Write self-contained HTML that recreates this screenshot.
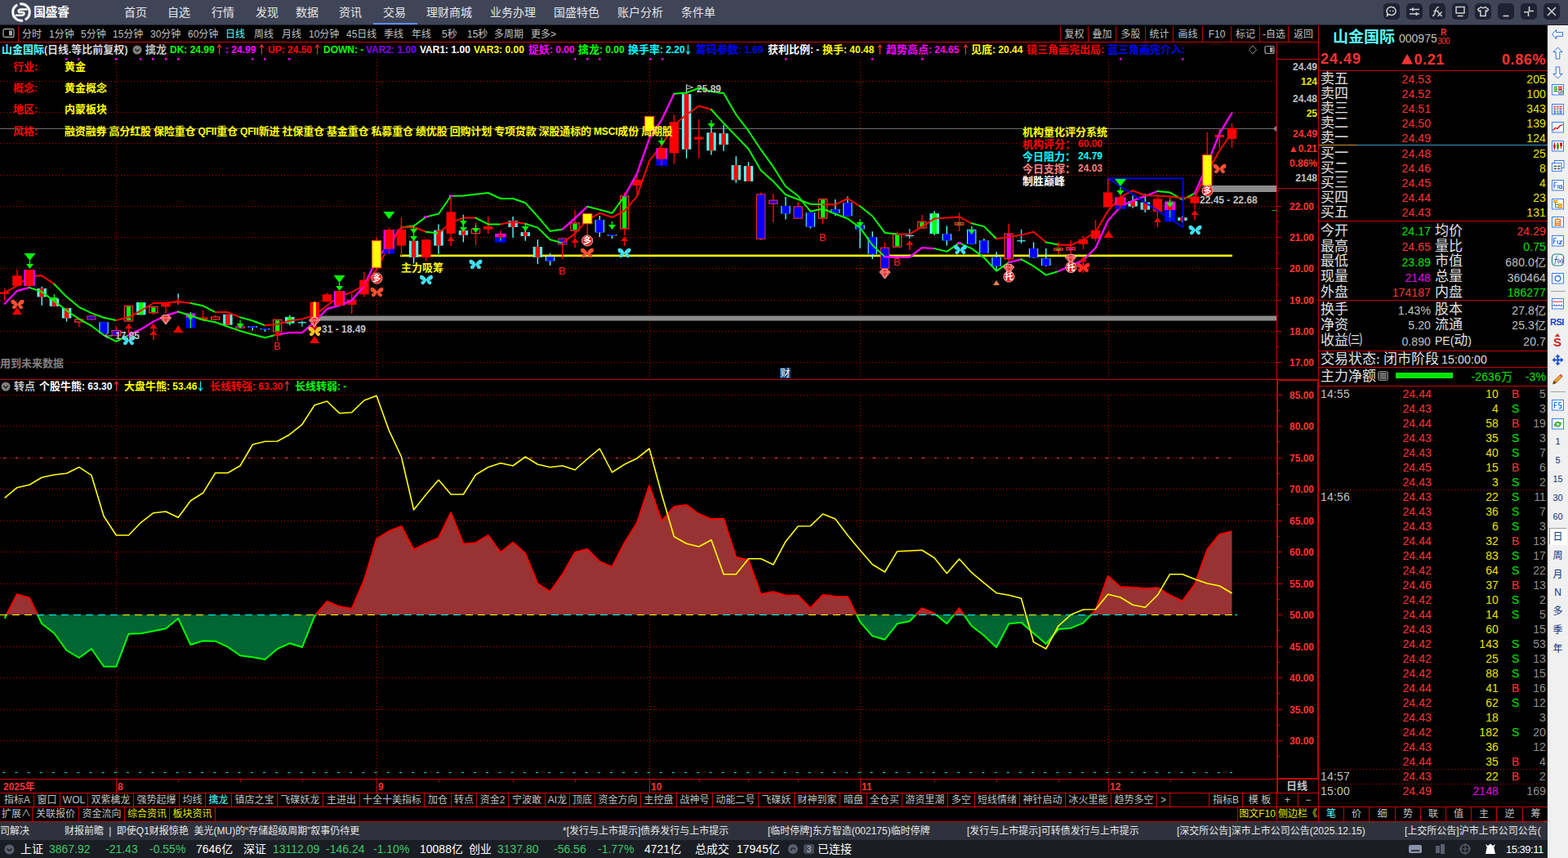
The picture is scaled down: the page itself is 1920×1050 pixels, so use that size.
<!DOCTYPE html>
<html lang="zh"><head><meta charset="utf-8"><title>stock</title><style>
*{box-sizing:border-box;margin:0;padding:0}
html,body{width:1920px;height:1050px;overflow:hidden;background:#000}
body{font-family:"Liberation Sans","Noto Sans CJK SC",sans-serif;color:#c0c0c0;position:relative;font-size:13px}
.abs{position:absolute}
.t{position:absolute;white-space:nowrap;line-height:1}
.b{font-weight:bold}
.hl{position:absolute;height:1px;background:#c80000}
.vl{position:absolute;width:1px;background:#c80000}
#title{position:absolute;left:0;top:0;width:1920px;height:31px;background:#3f4457;border-bottom:1px solid #1e2130}
#title .m{position:absolute;top:7px;font-size:14px;color:#e6e6e6;white-space:nowrap;line-height:16px}
.wb{position:absolute;top:4px;width:20px;height:20px;border-radius:5px;background:#1e2233}
#strip{position:absolute;left:1895px;top:31px;width:25px;height:1019px;background:#f0f0f0;border-left:1px solid #fff;border-top:1px solid #fff}
.r{color:#ff3232}.g{color:#00e600}.y{color:#e6e600}.c{color:#5cffff}.w{color:#e0e0e0}.m{color:#e600e6}.gy{color:#c0c0c0}.dg{color:#808080}
#news{position:absolute;left:0;top:1006px;width:1895px;height:22px;background:#2f323c;overflow:hidden}
#status{position:absolute;left:0;top:1028px;width:1895px;height:22px;background:#1a1d23;overflow:hidden}
.tab{position:absolute;top:971px;height:16px;font-size:12px;line-height:16px;text-align:center;color:#c0c0c0;white-space:nowrap;border-right:1px solid #c80000;overflow:hidden}
.tab2{position:absolute;top:988px;height:17px;font-size:12px;line-height:17px;text-align:center;color:#c0c0c0;white-space:nowrap;border-right:1px solid #c80000;overflow:hidden}
.pt{position:absolute;top:34px;font-size:12px;line-height:16px;color:#c0c0c0;white-space:nowrap}
.rp{position:absolute;white-space:nowrap;line-height:18px;height:18px;font-size:14px}
.lab{font-size:17px;color:#e0e0e0;font-family:"Liberation Serif","Noto Sans CJK SC",serif}
</style></head><body>
<svg class="abs" style="left:0;top:0" width="1920" height="1050" viewBox="0 0 1920 1050" shape-rendering="auto">
<g stroke="#c80000" stroke-width="1" stroke-dasharray="1 3" fill="none">
<path d="M0 99.5H1563"/>
<path d="M0 137.5H1563"/>
<path d="M0 175.5H1563"/>
<path d="M0 214.5H1563"/>
<path d="M0 252.5H1563"/>
<path d="M0 290.5H1563"/>
<path d="M0 328.5H1563"/>
<path d="M0 367.5H1563"/>
<path d="M0 405.5H1563"/>
<path d="M0 443.5H1563"/>
<path d="M0 483.5H1563"/>
<path d="M0 521.5H1563"/>
<path d="M0 560.5H1563"/>
<path d="M0 598.5H1563"/>
<path d="M0 637.5H1563"/>
<path d="M0 675.5H1563"/>
<path d="M0 714.5H1563"/>
<path d="M0 791.5H1563"/>
<path d="M0 829.5H1563"/>
<path d="M0 868.5H1563"/>
<path d="M0 906.5H1563"/>
<path d="M142.5 72V464M142.5 484V953"/>
<path d="M461.5 72V464M461.5 484V953"/>
<path d="M795.5 72V464M795.5 484V953"/>
<path d="M1053.5 72V464M1053.5 484V953"/>
<path d="M1357.5 72V464M1357.5 484V953"/>
</g>
<path d="M4 560.5H1510" stroke="#ff4848" stroke-width="1" stroke-dasharray="3 12" fill="none"/>
<path d="M3.2 945.5h3M18.4 945.5h3M33.6 945.5h3M48.7 945.5h3M63.9 945.5h3M79.1 945.5h3M94.3 945.5h3M109.5 945.5h3M124.6 945.5h3M139.8 945.5h3M155.0 945.5h3M170.2 945.5h3M185.4 945.5h3M200.5 945.5h3M215.7 945.5h3M230.9 945.5h3M246.1 945.5h3M261.3 945.5h3M276.4 945.5h3M291.6 945.5h3M306.8 945.5h3M322.0 945.5h3M337.2 945.5h3M352.3 945.5h3M367.5 945.5h3M382.7 945.5h3M397.9 945.5h3M413.1 945.5h3M428.2 945.5h3M443.4 945.5h3M458.6 945.5h3M473.8 945.5h3M489.0 945.5h3M504.1 945.5h3M519.3 945.5h3M534.5 945.5h3M549.7 945.5h3M564.9 945.5h3M580.0 945.5h3M595.2 945.5h3M610.4 945.5h3M625.6 945.5h3M640.8 945.5h3M655.9 945.5h3M671.1 945.5h3M686.3 945.5h3M701.5 945.5h3M716.7 945.5h3M731.8 945.5h3M747.0 945.5h3M762.2 945.5h3M777.4 945.5h3M792.6 945.5h3M807.7 945.5h3M822.9 945.5h3M838.1 945.5h3M853.3 945.5h3M868.5 945.5h3M883.6 945.5h3M898.8 945.5h3M914.0 945.5h3M929.2 945.5h3M944.4 945.5h3M959.5 945.5h3M974.7 945.5h3M989.9 945.5h3M1005.1 945.5h3M1020.3 945.5h3M1035.4 945.5h3M1050.6 945.5h3M1065.8 945.5h3M1081.0 945.5h3M1096.2 945.5h3M1111.3 945.5h3M1126.5 945.5h3M1141.7 945.5h3M1156.9 945.5h3M1172.1 945.5h3M1187.2 945.5h3M1202.4 945.5h3M1217.6 945.5h3M1232.8 945.5h3M1248.0 945.5h3M1263.1 945.5h3M1278.3 945.5h3M1293.5 945.5h3M1308.7 945.5h3M1323.9 945.5h3M1339.0 945.5h3M1354.2 945.5h3M1369.4 945.5h3M1384.6 945.5h3M1399.8 945.5h3M1414.9 945.5h3M1430.1 945.5h3M1445.3 945.5h3M1460.5 945.5h3M1475.7 945.5h3M1490.8 945.5h3M1506.0 945.5h3" stroke="#00e0e0" stroke-width="1" fill="none"/>
<path d="M0 157.5H1563" stroke="#6e6e6e" stroke-width="1"/><path d="M1563 154v7l-4.500-3.500z" fill="#808080"/>
<rect x="388" y="386.5" width="1175" height="6" fill="#8c8c8c"/>
<rect x="1483" y="227" width="80" height="8" fill="#8c8c8c"/>
<rect x="490" y="311.6" width="1019" height="2.6" fill="#ffff00"/>
<defs><clipPath id="cu"><rect x="0" y="466" width="1563" height="286.29999999999995"/></clippath><clipPath id="cd"><rect x="0" y="752.3" width="1563" height="200"/></clippath></defs>
<polygon points="5.7,752.3 5.7,756.7 20.9,727.3 36.1,731.7 51.2,763.3 66.4,775 81.6,796 96.8,805 112.0,794 127.1,815.7 142.3,815.7 157.5,775.7 172.7,775.3 187.9,772.3 203.0,769.3 218.2,756.7 233.4,789 248.6,784.3 263.8,784.7 278.9,791.7 294.1,802.3 309.3,804.3 324.5,807 339.7,794 354.8,787.3 370.0,792 385.2,754 400.4,736 415.6,742.3 430.7,745 445.9,710 461.1,659.3 476.3,650 491.5,644 506.6,672.7 521.8,665 537.0,658.3 552.2,627.3 567.4,665.7 582.5,664.3 597.7,655 612.9,676 628.1,663.7 643.3,677.3 658.4,714.3 673.6,724 688.8,702.7 704.0,676 719.2,672 734.3,687.3 749.5,693.7 764.7,664.3 779.9,640 795.1,594.3 810.2,637.3 825.4,620 840.6,618 855.8,629 871.0,635.3 886.1,634.7 901.3,682 916.5,685.3 931.7,727.3 946.9,724.3 962.0,728.7 977.2,728.7 992.4,744.3 1007.6,728 1022.8,730 1037.9,730.3 1053.1,761 1068.3,778.3 1083.5,782.7 1098.7,763.3 1113.8,760.3 1129.0,744.3 1144.2,750.7 1159.4,763.3 1174.6,744.3 1189.7,766 1204.9,777.7 1220.1,792.3 1235.3,763.3 1250.5,761.7 1265.6,775 1280.8,788 1296.0,770 1311.2,768.7 1326.4,762.3 1341.5,746.7 1356.7,705 1371.9,718.3 1387.1,719 1402.3,720.3 1417.4,719.3 1432.6,728.3 1447.8,735.7 1463.0,715 1478.2,672.7 1493.3,654 1508.5,650.3 1508.5,752.3" fill="#993333" clip-path="url(#cu)"/>
<polygon points="5.7,752.3 5.7,756.7 20.9,727.3 36.1,731.7 51.2,763.3 66.4,775 81.6,796 96.8,805 112.0,794 127.1,815.7 142.3,815.7 157.5,775.7 172.7,775.3 187.9,772.3 203.0,769.3 218.2,756.7 233.4,789 248.6,784.3 263.8,784.7 278.9,791.7 294.1,802.3 309.3,804.3 324.5,807 339.7,794 354.8,787.3 370.0,792 385.2,754 400.4,736 415.6,742.3 430.7,745 445.9,710 461.1,659.3 476.3,650 491.5,644 506.6,672.7 521.8,665 537.0,658.3 552.2,627.3 567.4,665.7 582.5,664.3 597.7,655 612.9,676 628.1,663.7 643.3,677.3 658.4,714.3 673.6,724 688.8,702.7 704.0,676 719.2,672 734.3,687.3 749.5,693.7 764.7,664.3 779.9,640 795.1,594.3 810.2,637.3 825.4,620 840.6,618 855.8,629 871.0,635.3 886.1,634.7 901.3,682 916.5,685.3 931.7,727.3 946.9,724.3 962.0,728.7 977.2,728.7 992.4,744.3 1007.6,728 1022.8,730 1037.9,730.3 1053.1,761 1068.3,778.3 1083.5,782.7 1098.7,763.3 1113.8,760.3 1129.0,744.3 1144.2,750.7 1159.4,763.3 1174.6,744.3 1189.7,766 1204.9,777.7 1220.1,792.3 1235.3,763.3 1250.5,761.7 1265.6,775 1280.8,788 1296.0,770 1311.2,768.7 1326.4,762.3 1341.5,746.7 1356.7,705 1371.9,718.3 1387.1,719 1402.3,720.3 1417.4,719.3 1432.6,728.3 1447.8,735.7 1463.0,715 1478.2,672.7 1493.3,654 1508.5,650.3 1508.5,752.3" fill="#006633" clip-path="url(#cd)"/>
<polyline points="5.7,756.7 20.9,727.3 36.1,731.7 51.2,763.3 66.4,775 81.6,796 96.8,805 112.0,794 127.1,815.7 142.3,815.7 157.5,775.7 172.7,775.3 187.9,772.3 203.0,769.3 218.2,756.7 233.4,789 248.6,784.3 263.8,784.7 278.9,791.7 294.1,802.3 309.3,804.3 324.5,807 339.7,794 354.8,787.3 370.0,792 385.2,754 400.4,736 415.6,742.3 430.7,745 445.9,710 461.1,659.3 476.3,650 491.5,644 506.6,672.7 521.8,665 537.0,658.3 552.2,627.3 567.4,665.7 582.5,664.3 597.7,655 612.9,676 628.1,663.7 643.3,677.3 658.4,714.3 673.6,724 688.8,702.7 704.0,676 719.2,672 734.3,687.3 749.5,693.7 764.7,664.3 779.9,640 795.1,594.3 810.2,637.3 825.4,620 840.6,618 855.8,629 871.0,635.3 886.1,634.7 901.3,682 916.5,685.3 931.7,727.3 946.9,724.3 962.0,728.7 977.2,728.7 992.4,744.3 1007.6,728 1022.8,730 1037.9,730.3 1053.1,761 1068.3,778.3 1083.5,782.7 1098.7,763.3 1113.8,760.3 1129.0,744.3 1144.2,750.7 1159.4,763.3 1174.6,744.3 1189.7,766 1204.9,777.7 1220.1,792.3 1235.3,763.3 1250.5,761.7 1265.6,775 1280.8,788 1296.0,770 1311.2,768.7 1326.4,762.3 1341.5,746.7 1356.7,705 1371.9,718.3 1387.1,719 1402.3,720.3 1417.4,719.3 1432.6,728.3 1447.8,735.7 1463.0,715 1478.2,672.7 1493.3,654 1508.5,650.3" fill="none" stroke="#ff0000" stroke-width="2" stroke-linejoin="round" clip-path="url(#cu)"/>
<polyline points="5.7,756.7 20.9,727.3 36.1,731.7 51.2,763.3 66.4,775 81.6,796 96.8,805 112.0,794 127.1,815.7 142.3,815.7 157.5,775.7 172.7,775.3 187.9,772.3 203.0,769.3 218.2,756.7 233.4,789 248.6,784.3 263.8,784.7 278.9,791.7 294.1,802.3 309.3,804.3 324.5,807 339.7,794 354.8,787.3 370.0,792 385.2,754 400.4,736 415.6,742.3 430.7,745 445.9,710 461.1,659.3 476.3,650 491.5,644 506.6,672.7 521.8,665 537.0,658.3 552.2,627.3 567.4,665.7 582.5,664.3 597.7,655 612.9,676 628.1,663.7 643.3,677.3 658.4,714.3 673.6,724 688.8,702.7 704.0,676 719.2,672 734.3,687.3 749.5,693.7 764.7,664.3 779.9,640 795.1,594.3 810.2,637.3 825.4,620 840.6,618 855.8,629 871.0,635.3 886.1,634.7 901.3,682 916.5,685.3 931.7,727.3 946.9,724.3 962.0,728.7 977.2,728.7 992.4,744.3 1007.6,728 1022.8,730 1037.9,730.3 1053.1,761 1068.3,778.3 1083.5,782.7 1098.7,763.3 1113.8,760.3 1129.0,744.3 1144.2,750.7 1159.4,763.3 1174.6,744.3 1189.7,766 1204.9,777.7 1220.1,792.3 1235.3,763.3 1250.5,761.7 1265.6,775 1280.8,788 1296.0,770 1311.2,768.7 1326.4,762.3 1341.5,746.7 1356.7,705 1371.9,718.3 1387.1,719 1402.3,720.3 1417.4,719.3 1432.6,728.3 1447.8,735.7 1463.0,715 1478.2,672.7 1493.3,654 1508.5,650.3" fill="none" stroke="#00ff00" stroke-width="2" stroke-linejoin="round" clip-path="url(#cd)"/>
<path d="M0 752.5H1512" stroke="#ffff00" stroke-width="1" stroke-dasharray="9 6" fill="none"/>
<path d="M45 752.5H150M255 752.5H360M465 752.5H570M675 752.5H780M885 752.5H990M1095 752.5H1200M1305 752.5H1410M1515 752.5H1512" stroke="#00ffff" stroke-width="1" stroke-dasharray="9 6" fill="none"/>
<polyline points="5.7,609.3 20.9,596.7 36.1,593.3 51.2,584.3 66.4,581 81.6,579.3 96.8,571.7 112.0,581.7 127.1,631.7 142.3,655 157.5,655 172.7,639.3 187.9,627.7 203.0,626 218.2,633.3 233.4,612.7 248.6,603.3 263.8,578.7 278.9,578.7 294.1,570 309.3,544 324.5,540.3 339.7,540 354.8,531.7 370.0,519.3 385.2,495.7 400.4,491 415.6,505.7 430.7,504.7 445.9,490 461.1,484.3 476.3,526.7 491.5,559 506.6,624 521.8,605 537.0,587.3 552.2,605 567.4,605 582.5,581 597.7,571.7 612.9,566.7 628.1,570 643.3,559 658.4,568.3 673.6,571.7 688.8,570 704.0,575 719.2,561.7 734.3,549 749.5,578 764.7,568.3 779.9,561 795.1,549 810.2,605 825.4,656.7 840.6,665.3 855.8,669 871.0,660.7 886.1,702.7 901.3,702.7 916.5,683.7 931.7,683.7 946.9,691 962.0,662.7 977.2,644 992.4,643.7 1007.6,629 1022.8,635 1037.9,655 1053.1,673.3 1068.3,690.7 1083.5,700 1098.7,674.7 1113.8,674 1129.0,673.3 1144.2,682.7 1159.4,701.7 1174.6,684 1189.7,700.7 1204.9,713.3 1220.1,725.7 1235.3,728.3 1250.5,732.3 1265.6,785.7 1280.8,794 1296.0,766 1311.2,752.3 1326.4,746 1341.5,745.7 1356.7,727.3 1371.9,731 1387.1,740.3 1402.3,743.3 1417.4,728.3 1432.6,702.7 1447.8,702.7 1463.0,708.7 1478.2,714 1493.3,717 1508.5,726" fill="none" stroke="#ffff00" stroke-width="1.6" stroke-linejoin="round"/>
<path d="M5.7 352.9V367.5" stroke="#ff0000" stroke-width="1.4"/>
<rect x="0.0" y="357.5" width="11.4" height="2.1" fill="#ff0000"/>
<path d="M20.9 330.0V349.8" stroke="#ff0000" stroke-width="1.4"/>
<rect x="15.2" y="337.3" width="11.4" height="12.5" fill="#ff0000"/>
<path d="M51.2 350.8V373.8" stroke="#54ffff" stroke-width="1.4"/>
<rect x="45.5" y="352.9" width="11.4" height="10.4" fill="#54ffff"/>
<rect x="48.4" y="352.9" width="5.6" height="10.4" fill="#ff0000"/>
<path d="M66.4 365.4V374.8" stroke="#54ffff" stroke-width="1.4"/>
<rect x="60.7" y="365.4" width="11.4" height="9.4" fill="#54ffff"/>
<rect x="63.6" y="365.4" width="5.6" height="9.4" fill="#ff0000"/>
<path d="M81.6 376.9V393.5" stroke="#54ffff" stroke-width="1.4"/>
<rect x="75.9" y="376.9" width="11.4" height="12.5" fill="#54ffff"/>
<rect x="78.8" y="376.9" width="5.6" height="12.5" fill="#ff0000"/>
<path d="M96.8 390.4V400.4" stroke="#ff0000" stroke-width="1.4"/>
<rect x="91.7" y="391.0" width="10.2" height="3.0" fill="#000" stroke="#ff3030" stroke-width="1.3"/>
<path d="M112.0 386.2V391.5" stroke="#ff0000" stroke-width="1.4"/>
<rect x="106.8" y="386.8" width="10.4" height="4.2" fill="#0000ff" stroke="#ff3030" stroke-width="1"/>
<path d="M127.1 394.2V408.1" stroke="#54ffff" stroke-width="1.4"/>
<rect x="121.4" y="394.2" width="11.4" height="13.9" fill="#54ffff"/>
<rect x="122.5" y="394.2" width="9.2" height="13.9" fill="#0000ff"/>
<path d="M142.3 398.8V411.2" stroke="#ff0000" stroke-width="1.4"/>
<rect x="137.1" y="404.5" width="10.4" height="6.2" fill="#0000ff" stroke="#ff3030" stroke-width="1"/>
<path d="M157.5 373.8V393.5" stroke="#ff0000" stroke-width="1.4"/>
<rect x="152.4" y="374.4" width="10.2" height="18.6" fill="#000" stroke="#ff3030" stroke-width="1.3"/>
<rect x="154.9" y="375.2" width="5.2" height="16.8" fill="#00ff00"/>
<path d="M172.7 370.0V385.2" stroke="#54ffff" stroke-width="1.4"/>
<rect x="167.0" y="370.0" width="11.4" height="15.2" fill="#54ffff"/>
<rect x="169.9" y="370.0" width="5.6" height="15.2" fill="#00ff00"/>
<path d="M187.9 374.8V385.0" stroke="#ff0000" stroke-width="1.4"/>
<rect x="182.8" y="375.4" width="10.2" height="7.5" fill="#000" stroke="#ff3030" stroke-width="1.3"/>
<rect x="185.3" y="376.3" width="5.2" height="5.7" fill="#00ff00"/>
<path d="M203.0 371.0V383.5" stroke="#ff0000" stroke-width="1.4"/>
<rect x="197.3" y="371.0" width="11.4" height="4.4" fill="#ff0000"/>
<path d="M218.2 359.2V372.7" stroke="#54ffff" stroke-width="1.4"/>
<path d="M218.2 364.2V372.7" stroke="#ff0000" stroke-width="1.4"/>
<path d="M213.5 369.0H222.9" stroke="#ff0000" stroke-width="1.4"/>
<rect x="227.7" y="383.5" width="11.4" height="18.0" fill="#0000ff"/>
<rect x="227.7" y="383.5" width="11.4" height="5.0" fill="#ff00ff"/>
<path d="M233.4 387.5V401.5" stroke="#00ff00" stroke-width="1.2"/>
<path d="M248.6 380.0V392.5" stroke="#ff0000" stroke-width="1.4"/>
<rect x="242.9" y="388.3" width="11.4" height="3.2" fill="#ff0000"/>
<path d="M263.8 385.6V391.5" stroke="#ff0000" stroke-width="1.4"/>
<rect x="258.7" y="387.9" width="10.2" height="3.0" fill="#000" stroke="#ff3030" stroke-width="1.3"/>
<path d="M278.9 384.8V397.7" stroke="#54ffff" stroke-width="1.4"/>
<rect x="273.2" y="384.8" width="11.4" height="12.9" fill="#54ffff"/>
<rect x="276.1" y="384.8" width="5.6" height="12.9" fill="#ff0000"/>
<path d="M294.1 398.8V401.9" stroke="#ff0000" stroke-width="1.4"/>
<rect x="288.9" y="399.2" width="10.4" height="2.1" fill="#0000ff" stroke="#ff3030" stroke-width="1"/>
<path d="M309.3 399.2V404.6" stroke="#54ffff" stroke-width="1.4"/>
<rect x="303.6" y="399.2" width="11.4" height="1.6" fill="#54ffff"/>
<rect x="304.7" y="399.2" width="9.2" height="1.6" fill="#0000ff"/>
<path d="M324.5 401.9V406.0" stroke="#54ffff" stroke-width="1.4"/>
<rect x="318.8" y="401.9" width="11.4" height="1.4" fill="#54ffff"/>
<rect x="319.9" y="401.9" width="9.2" height="1.4" fill="#0000ff"/>
<path d="M339.7 390.8V406.5" stroke="#ff0000" stroke-width="1.4"/>
<rect x="334.6" y="391.4" width="10.2" height="14.5" fill="#000" stroke="#ff3030" stroke-width="1.3"/>
<rect x="337.1" y="392.3" width="5.2" height="12.7" fill="#00ff00"/>
<path d="M354.8 385.8V398.1" stroke="#54ffff" stroke-width="1.4"/>
<rect x="349.1" y="387.9" width="11.4" height="7.7" fill="#54ffff"/>
<rect x="352.0" y="387.9" width="5.6" height="7.7" fill="#00ff00"/>
<path d="M370.0 392.5V399.8" stroke="#54ffff" stroke-width="1.1"/>
<path d="M364.8 394.8H375.2" stroke="#54ffff" stroke-width="1.2"/>
<path d="M400.4 358.2V369.3" stroke="#ff0000" stroke-width="1.4"/>
<rect x="394.7" y="360.3" width="11.4" height="9.0" fill="#ff0000"/>
<path d="M430.7 359.2V384.0" stroke="#ff0000" stroke-width="1.4"/>
<rect x="425.0" y="366.6" width="11.4" height="6.3" fill="#ff0000"/>
<path d="M445.9 333.0V363.4" stroke="#ff0000" stroke-width="1.4"/>
<rect x="440.2" y="342.5" width="11.4" height="17.8" fill="#ff0000"/>
<path d="M491.5 266.0V313.1" stroke="#ff0000" stroke-width="1.4"/>
<rect x="485.8" y="280.7" width="11.4" height="19.9" fill="#ff0000"/>
<path d="M506.6 294.7V322.6" stroke="#54ffff" stroke-width="1.4"/>
<rect x="500.9" y="294.7" width="11.4" height="20.1" fill="#54ffff"/>
<rect x="503.8" y="294.7" width="5.6" height="20.1" fill="#ff0000"/>
<path d="M521.8 293.2V319.8" stroke="#ff0000" stroke-width="1.4"/>
<rect x="516.1" y="293.2" width="11.4" height="22.0" fill="#ff0000"/>
<path d="M537.0 274.4V311.0" stroke="#54ffff" stroke-width="1.4"/>
<rect x="531.3" y="281.7" width="11.4" height="18.9" fill="#54ffff"/>
<rect x="534.2" y="281.7" width="5.6" height="18.9" fill="#ff0000"/>
<path d="M552.2 241.9V289.0" stroke="#ff0000" stroke-width="1.4"/>
<rect x="546.5" y="259.3" width="11.4" height="26.6" fill="#ff0000"/>
<path d="M567.4 262.9V296.4" stroke="#54ffff" stroke-width="1.4"/>
<rect x="561.7" y="282.1" width="11.4" height="5.5" fill="#54ffff"/>
<rect x="564.6" y="282.1" width="5.6" height="5.5" fill="#ff0000"/>
<path d="M582.5 272.3V300.0" stroke="#ff0000" stroke-width="1.4"/>
<rect x="577.4" y="280.2" width="10.2" height="5.5" fill="#000" stroke="#ff3030" stroke-width="1.3"/>
<path d="M597.7 265.0V286.3" stroke="#ff0000" stroke-width="1.4"/>
<rect x="592.0" y="277.1" width="11.4" height="3.6" fill="#ff0000"/>
<path d="M628.1 265.0V291.0" stroke="#54ffff" stroke-width="1.4"/>
<rect x="622.4" y="270.2" width="11.4" height="7.7" fill="#54ffff"/>
<rect x="625.3" y="270.2" width="5.6" height="7.7" fill="#ff0000"/>
<path d="M643.3 280.7V294.7" stroke="#54ffff" stroke-width="1.4"/>
<rect x="637.6" y="284.2" width="11.4" height="4.8" fill="#54ffff"/>
<rect x="640.5" y="284.2" width="5.6" height="4.8" fill="#ff0000"/>
<path d="M658.4 293.2V323.2" stroke="#54ffff" stroke-width="1.4"/>
<rect x="652.7" y="302.0" width="11.4" height="12.8" fill="#54ffff"/>
<rect x="655.6" y="302.0" width="5.6" height="12.8" fill="#ff0000"/>
<path d="M673.6 310.0V325.0" stroke="#54ffff" stroke-width="1.4"/>
<rect x="667.9" y="314.2" width="11.4" height="5.2" fill="#54ffff"/>
<rect x="669.0" y="314.2" width="9.2" height="5.2" fill="#0000ff"/>
<path d="M688.8 291.6V316.7" stroke="#ff0000" stroke-width="1.4"/>
<rect x="683.6" y="292.1" width="10.4" height="6.9" fill="#0000ff" stroke="#ff3030" stroke-width="1"/>
<path d="M704.0 257.0V291.0" stroke="#ff0000" stroke-width="1.4"/>
<rect x="698.9" y="272.9" width="10.2" height="9.3" fill="#000" stroke="#ff3030" stroke-width="1.3"/>
<rect x="701.4" y="273.8" width="5.2" height="7.5" fill="#00ff00"/>
<path d="M734.3 263.9V290.0" stroke="#54ffff" stroke-width="1.4"/>
<rect x="728.6" y="269.1" width="11.4" height="15.3" fill="#54ffff"/>
<rect x="729.7" y="269.1" width="9.2" height="15.3" fill="#0000ff"/>
<path d="M749.5 287.0V292.2" stroke="#54ffff" stroke-width="1.4"/>
<rect x="743.8" y="287.0" width="11.4" height="1.4" fill="#54ffff"/>
<rect x="744.9" y="287.0" width="9.2" height="1.4" fill="#0000ff"/>
<path d="M764.7 235.6V288.0" stroke="#ff0000" stroke-width="1.4"/>
<rect x="759.6" y="240.0" width="10.2" height="39.9" fill="#000" stroke="#ff3030" stroke-width="1.3"/>
<rect x="762.1" y="240.9" width="5.2" height="38.1" fill="#00ff00"/>
<path d="M779.9 213.6V237.7" stroke="#ff0000" stroke-width="1.4"/>
<rect x="774.2" y="219.9" width="11.4" height="7.3" fill="#ff0000"/>
<path d="M825.4 140.3V200.6" stroke="#ff0000" stroke-width="1.4"/>
<rect x="819.7" y="149.3" width="11.4" height="38.1" fill="#ff0000"/>
<path d="M840.6 103.6V193.7" stroke="#54ffff" stroke-width="1.4"/>
<rect x="834.9" y="115.1" width="11.4" height="67.7" fill="#54ffff"/>
<rect x="837.8" y="115.1" width="5.6" height="67.7" fill="#ff0000"/>
<path d="M855.8 146.2V193.7" stroke="#ff0000" stroke-width="1.4"/>
<rect x="850.1" y="167.5" width="11.4" height="3.2" fill="#ff0000"/>
<path d="M871.0 156.0V189.5" stroke="#54ffff" stroke-width="1.4"/>
<rect x="865.3" y="162.3" width="11.4" height="22.0" fill="#54ffff"/>
<rect x="868.2" y="162.3" width="5.6" height="22.0" fill="#ff0000"/>
<path d="M886.1 152.9V184.7" stroke="#54ffff" stroke-width="1.4"/>
<rect x="880.4" y="163.3" width="11.4" height="13.7" fill="#54ffff"/>
<rect x="883.3" y="163.3" width="5.6" height="13.7" fill="#ff0000"/>
<path d="M901.3 191.2V223.7" stroke="#54ffff" stroke-width="1.4"/>
<rect x="895.6" y="202.1" width="11.4" height="18.2" fill="#54ffff"/>
<rect x="898.5" y="202.1" width="5.6" height="18.2" fill="#ff0000"/>
<path d="M916.5 198.3V222.0" stroke="#54ffff" stroke-width="1.4"/>
<rect x="910.8" y="203.1" width="11.4" height="18.9" fill="#54ffff"/>
<rect x="913.7" y="203.1" width="5.6" height="18.9" fill="#ff0000"/>
<path d="M931.7 235.5V294.0" stroke="#ff0000" stroke-width="1.4"/>
<rect x="926.5" y="237.8" width="10.4" height="54.5" fill="#0000ff" stroke="#ff3030" stroke-width="1"/>
<path d="M946.9 237.3V272.3" stroke="#ff0000" stroke-width="1.4"/>
<rect x="941.7" y="245.1" width="10.4" height="4.1" fill="#0000ff" stroke="#ff3030" stroke-width="1"/>
<path d="M962.0 240.9V268.5" stroke="#54ffff" stroke-width="1.4"/>
<rect x="956.3" y="252.0" width="11.4" height="9.4" fill="#54ffff"/>
<rect x="957.4" y="252.0" width="9.2" height="9.4" fill="#0000ff"/>
<path d="M977.2 247.2V267.7" stroke="#ff0000" stroke-width="1.4"/>
<rect x="972.0" y="252.9" width="10.4" height="14.3" fill="#0000ff" stroke="#ff3030" stroke-width="1"/>
<path d="M992.4 260.1V279.6" stroke="#54ffff" stroke-width="1.4"/>
<rect x="986.7" y="260.1" width="11.4" height="17.4" fill="#54ffff"/>
<rect x="987.8" y="260.1" width="9.2" height="17.4" fill="#0000ff"/>
<path d="M1007.6 243.0V274.4" stroke="#ff0000" stroke-width="1.4"/>
<rect x="1002.5" y="243.6" width="10.2" height="23.5" fill="#000" stroke="#ff3030" stroke-width="1.3"/>
<rect x="1005.0" y="244.5" width="5.2" height="21.7" fill="#00ff00"/>
<path d="M1022.8 244.0V264.3" stroke="#54ffff" stroke-width="1.4"/>
<rect x="1017.1" y="256.2" width="11.4" height="4.6" fill="#54ffff"/>
<rect x="1018.2" y="256.2" width="9.2" height="4.6" fill="#0000ff"/>
<path d="M1037.9 240.4V264.3" stroke="#54ffff" stroke-width="1.4"/>
<rect x="1032.2" y="248.2" width="11.4" height="16.1" fill="#54ffff"/>
<rect x="1033.3" y="248.2" width="9.2" height="16.1" fill="#0000ff"/>
<path d="M1053.1 275.4V303.7" stroke="#54ffff" stroke-width="1.4"/>
<rect x="1047.4" y="275.4" width="11.4" height="4.9" fill="#54ffff"/>
<rect x="1048.5" y="275.4" width="9.2" height="4.9" fill="#0000ff"/>
<path d="M1068.3 283.3V316.9" stroke="#54ffff" stroke-width="1.4"/>
<rect x="1062.6" y="290.1" width="11.4" height="20.9" fill="#54ffff"/>
<rect x="1063.7" y="290.1" width="9.2" height="20.9" fill="#0000ff"/>
<path d="M1083.5 296.4V328.9" stroke="#ff0000" stroke-width="1.4"/>
<rect x="1078.3" y="303.2" width="10.4" height="25.2" fill="#0000ff" stroke="#ff3030" stroke-width="1"/>
<path d="M1098.7 283.4V302.7" stroke="#ff0000" stroke-width="1.4"/>
<rect x="1093.6" y="286.7" width="10.2" height="15.4" fill="#000" stroke="#ff3030" stroke-width="1.3"/>
<rect x="1096.1" y="287.6" width="5.2" height="13.6" fill="#00ff00"/>
<path d="M1113.8 280.0V292.2" stroke="#54ffff" stroke-width="1.1"/>
<path d="M1108.6 288.5H1119.0" stroke="#54ffff" stroke-width="1.2"/>
<path d="M1129.0 262.9V279.6" stroke="#ff0000" stroke-width="1.4"/>
<rect x="1123.9" y="271.3" width="10.2" height="7.7" fill="#000" stroke="#ff3030" stroke-width="1.3"/>
<rect x="1126.4" y="272.2" width="5.2" height="5.9" fill="#00ff00"/>
<path d="M1144.2 258.2V288.0" stroke="#54ffff" stroke-width="1.4"/>
<rect x="1138.5" y="261.3" width="11.4" height="24.8" fill="#54ffff"/>
<rect x="1141.4" y="261.3" width="5.6" height="24.8" fill="#00ff00"/>
<path d="M1159.4 276.5V300.6" stroke="#54ffff" stroke-width="1.4"/>
<rect x="1153.7" y="286.3" width="11.4" height="8.0" fill="#54ffff"/>
<rect x="1154.8" y="286.3" width="9.2" height="8.0" fill="#0000ff"/>
<path d="M1174.6 260.3V282.8" stroke="#ff0000" stroke-width="1.4"/>
<rect x="1169.5" y="272.5" width="10.2" height="2.8" fill="#000" stroke="#ff3030" stroke-width="1.3"/>
<rect x="1172.0" y="273.4" width="5.2" height="1.2" fill="#00ff00"/>
<path d="M1189.7 277.0V298.5" stroke="#54ffff" stroke-width="1.4"/>
<rect x="1184.0" y="280.7" width="11.4" height="17.8" fill="#54ffff"/>
<rect x="1185.1" y="280.7" width="9.2" height="17.8" fill="#0000ff"/>
<path d="M1204.9 292.0V310.0" stroke="#54ffff" stroke-width="1.4"/>
<rect x="1199.2" y="294.3" width="11.4" height="15.7" fill="#54ffff"/>
<rect x="1200.3" y="294.3" width="9.2" height="15.7" fill="#0000ff"/>
<path d="M1220.1 308.3V331.0" stroke="#54ffff" stroke-width="1.4"/>
<rect x="1214.4" y="314.8" width="11.4" height="10.9" fill="#54ffff"/>
<rect x="1215.5" y="314.8" width="9.2" height="10.9" fill="#0000ff"/>
<path d="M1235.3 273.8V321.5" stroke="#ff0000" stroke-width="1.4"/>
<rect x="1230.2" y="286.1" width="10.2" height="30.6" fill="#000" stroke="#ff3030" stroke-width="1.3"/>
<rect x="1232.7" y="287.0" width="5.2" height="28.8" fill="#ff00ff"/>
<path d="M1250.5 280.7V298.0" stroke="#54ffff" stroke-width="1.1"/>
<path d="M1245.3 294.8H1255.7" stroke="#54ffff" stroke-width="1.2"/>
<path d="M1265.6 296.4V316.0" stroke="#54ffff" stroke-width="1.4"/>
<rect x="1259.9" y="304.1" width="11.4" height="11.1" fill="#54ffff"/>
<rect x="1261.0" y="304.1" width="9.2" height="11.1" fill="#0000ff"/>
<path d="M1280.8 304.1V326.0" stroke="#54ffff" stroke-width="1.4"/>
<rect x="1275.1" y="316.3" width="11.4" height="8.8" fill="#54ffff"/>
<rect x="1276.2" y="316.3" width="9.2" height="8.8" fill="#0000ff"/>
<path d="M1296.0 296.4V311.0" stroke="#ff0000" stroke-width="1.4"/>
<rect x="1290.9" y="303.9" width="10.2" height="2.4" fill="#000" stroke="#ff3030" stroke-width="1.3"/>
<rect x="1293.4" y="304.8" width="5.2" height="1.2" fill="#00ff00"/>
<path d="M1311.2 293.7V311.0" stroke="#ff0000" stroke-width="1.4"/>
<rect x="1306.1" y="302.9" width="10.2" height="2.9" fill="#000" stroke="#ff3030" stroke-width="1.3"/>
<rect x="1308.6" y="303.8" width="5.2" height="1.2" fill="#ff00ff"/>
<path d="M1326.4 289.0V304.8" stroke="#ff0000" stroke-width="1.4"/>
<rect x="1320.7" y="292.8" width="11.4" height="6.1" fill="#ff0000"/>
<path d="M1341.5 269.1V295.3" stroke="#ff0000" stroke-width="1.4"/>
<rect x="1335.8" y="281.7" width="11.4" height="10.5" fill="#ff0000"/>
<path d="M1356.7 218.3V253.6" stroke="#ff0000" stroke-width="1.4"/>
<rect x="1351.0" y="235.4" width="11.4" height="18.2" fill="#ff0000"/>
<path d="M1387.1 239.5V254.8" stroke="#54ffff" stroke-width="1.4"/>
<rect x="1381.4" y="246.1" width="11.4" height="6.5" fill="#54ffff"/>
<rect x="1384.3" y="246.1" width="5.6" height="6.5" fill="#ff0000"/>
<path d="M1402.3 237.2V259.9" stroke="#54ffff" stroke-width="1.4"/>
<rect x="1396.6" y="247.6" width="11.4" height="9.0" fill="#54ffff"/>
<rect x="1399.5" y="247.6" width="5.6" height="9.0" fill="#ff0000"/>
<path d="M1417.4 238.8V266.1" stroke="#ff0000" stroke-width="1.4"/>
<rect x="1411.7" y="243.4" width="11.4" height="15.7" fill="#ff0000"/>
<path d="M1447.8 264.3V272.0" stroke="#54ffff" stroke-width="1.4"/>
<rect x="1442.1" y="266.2" width="11.4" height="3.8" fill="#54ffff"/>
<rect x="1445.0" y="266.2" width="5.6" height="3.8" fill="#ff0000"/>
<path d="M1463.0 240.5V256.7" stroke="#ff0000" stroke-width="1.4"/>
<rect x="1457.3" y="240.5" width="11.4" height="8.2" fill="#ff0000"/>
<path d="M1493.3 157.6V181.4" stroke="#ff0000" stroke-width="1.4"/>
<rect x="1487.6" y="164.9" width="11.4" height="3.2" fill="#ff0000"/>
<path d="M1508.5 151.0V180.9" stroke="#ff0000" stroke-width="1.4"/>
<rect x="1502.8" y="156.7" width="11.4" height="13.3" fill="#ff0000"/>
<polyline points="5.7,371.7 20.9,356 36.1,351.9" fill="none" stroke="#ff00ff" stroke-width="2.4" stroke-linejoin="round" stroke-linecap="round"/>
<polyline points="36.1,351.9 51.2,357.1 66.4,368.5 81.6,380 96.8,390.4 112.0,398.75 127.1,410.2 142.3,417.9 157.5,410.2" fill="none" stroke="#00ff00" stroke-width="2.0" stroke-linejoin="round" stroke-linecap="round"/>
<polyline points="157.5,410.2 172.7,402.9 187.9,393.5 203.0,386.25 218.2,381.5" fill="none" stroke="#ff00ff" stroke-width="2.4" stroke-linejoin="round" stroke-linecap="round"/>
<polyline points="218.2,381.5 233.4,386.25 248.6,391.5 263.8,394.2 278.9,399.8 294.1,405 309.3,409.2 324.5,413.3 339.7,409.2" fill="none" stroke="#00ff00" stroke-width="2.0" stroke-linejoin="round" stroke-linecap="round"/>
<polyline points="339.7,409.2 354.8,407.1 370.0,407.1 385.2,394 400.4,378 415.6,373.9 430.7,367.6 445.9,349.8 461.1,317.3 476.3,298.5 491.5,278.6" fill="none" stroke="#ff00ff" stroke-width="2.4" stroke-linejoin="round" stroke-linecap="round"/>
<polyline points="491.5,278.6 506.6,276.5 521.8,265.4 537.0,261.8 552.2,239.8 567.4,239.4 582.5,237.7 597.7,236 612.9,243 628.1,243 643.3,248.2 658.4,265 673.6,282.8 688.8,280.7" fill="none" stroke="#00ff00" stroke-width="2.0" stroke-linejoin="round" stroke-linecap="round"/>
<polyline points="688.8,280.7 704.0,267 719.2,252.8" fill="none" stroke="#ff00ff" stroke-width="2.4" stroke-linejoin="round" stroke-linecap="round"/>
<polyline points="719.2,252.8 734.3,256.6 749.5,260.8 764.7,240" fill="none" stroke="#00ff00" stroke-width="2.0" stroke-linejoin="round" stroke-linecap="round"/>
<polyline points="764.7,240 779.9,212.6 795.1,169.6 810.2,146.6 825.4,114.7" fill="none" stroke="#ff00ff" stroke-width="2.4" stroke-linejoin="round" stroke-linecap="round"/>
<polyline points="825.4,114.7 840.6,113.5 855.8,107.8 871.0,112 886.1,114.1 901.3,140.3 916.5,160.2 931.7,183.2 946.9,204.2 962.0,228.3 977.2,239.8 992.4,258.7 1007.6,255.5 1022.8,261.8 1037.9,267.5 1053.1,278.6 1068.3,300 1083.5,314.2" fill="none" stroke="#00ff00" stroke-width="2.0" stroke-linejoin="round" stroke-linecap="round"/>
<polyline points="1083.5,314.2 1098.7,314.8 1113.8,314.8 1129.0,303.1 1144.2,304.1" fill="none" stroke="#ff00ff" stroke-width="2.4" stroke-linejoin="round" stroke-linecap="round"/>
<polyline points="1144.2,304.1 1159.4,307.9 1174.6,297.4 1189.7,304.1 1204.9,315.2 1220.1,331.6 1235.3,321.1" fill="none" stroke="#00ff00" stroke-width="2.0" stroke-linejoin="round" stroke-linecap="round"/>
<polyline points="1235.3,321.1 1250.5,317.3" fill="none" stroke="#ff00ff" stroke-width="2.4" stroke-linejoin="round" stroke-linecap="round"/>
<polyline points="1250.5,317.3 1265.6,325.7 1280.8,336.6 1296.0,332" fill="none" stroke="#00ff00" stroke-width="2.0" stroke-linejoin="round" stroke-linecap="round"/>
<polyline points="1296.0,332 1311.2,325.1 1326.4,318.4 1341.5,303.5 1356.7,270 1371.9,253 1387.1,245.5 1402.3,240 1417.4,234" fill="none" stroke="#ff00ff" stroke-width="2.4" stroke-linejoin="round" stroke-linecap="round"/>
<polyline points="1417.4,234 1432.6,235.5 1447.8,244.3 1463.0,236.7" fill="none" stroke="#00ff00" stroke-width="2.0" stroke-linejoin="round" stroke-linecap="round"/>
<polyline points="1463.0,236.7 1478.2,201.4 1493.3,163.3 1508.5,138.2" fill="none" stroke="#ff00ff" stroke-width="2.4" stroke-linejoin="round" stroke-linecap="round"/>
<polyline points="5.7,358.1 20.9,349.8 36.1,337.9 51.2,337.3 66.4,347.7" fill="none" stroke="#ff0000" stroke-width="2.0" stroke-linejoin="round" stroke-linecap="round"/>
<polyline points="66.4,347.7 81.6,363.3 96.8,375.8 112.0,383.1 127.1,388.75 142.3,391.9" fill="none" stroke="#00ff00" stroke-width="2.0" stroke-linejoin="round" stroke-linecap="round"/>
<polyline points="142.3,391.9 157.5,388.3 172.7,380 187.9,371 203.0,370.6 218.2,369.2 233.4,371" fill="none" stroke="#ff0000" stroke-width="2.0" stroke-linejoin="round" stroke-linecap="round"/>
<polyline points="233.4,371 248.6,374.2 263.8,382.1" fill="none" stroke="#00ff00" stroke-width="2.0" stroke-linejoin="round" stroke-linecap="round"/>
<polyline points="263.8,382.1 278.9,382.1 294.1,388.3" fill="none" stroke="#ff0000" stroke-width="2.0" stroke-linejoin="round" stroke-linecap="round"/>
<polyline points="294.1,388.3 309.3,392.5 324.5,398.3" fill="none" stroke="#00ff00" stroke-width="2.0" stroke-linejoin="round" stroke-linecap="round"/>
<polyline points="324.5,398.3 339.7,396.7 354.8,392.5 370.0,390.4 385.2,386 400.4,374 415.6,362.4 430.7,357.6 445.9,349.2 461.1,329.9 476.3,300.6 491.5,278.6 506.6,277.9 521.8,283.8" fill="none" stroke="#ff0000" stroke-width="2.0" stroke-linejoin="round" stroke-linecap="round"/>
<polyline points="521.8,283.8 537.0,285.5" fill="none" stroke="#00ff00" stroke-width="2.0" stroke-linejoin="round" stroke-linecap="round"/>
<polyline points="537.0,285.5 552.2,272.3 567.4,266.6 582.5,266.6" fill="none" stroke="#ff0000" stroke-width="2.0" stroke-linejoin="round" stroke-linecap="round"/>
<polyline points="582.5,266.6 597.7,274.4 612.9,274.4" fill="none" stroke="#00ff00" stroke-width="2.0" stroke-linejoin="round" stroke-linecap="round"/>
<polyline points="612.9,274.4 628.1,271.2 643.3,273.8" fill="none" stroke="#ff0000" stroke-width="2.0" stroke-linejoin="round" stroke-linecap="round"/>
<polyline points="643.3,273.8 658.4,278.6 673.6,293.2 688.8,297.4" fill="none" stroke="#00ff00" stroke-width="2.0" stroke-linejoin="round" stroke-linecap="round"/>
<polyline points="688.8,297.4 704.0,285.9 719.2,269.1 734.3,260.8 749.5,266 764.7,258 779.9,240.4 795.1,196.9 810.2,178 825.4,152.9 840.6,140.3 855.8,129.8 871.0,134" fill="none" stroke="#ff0000" stroke-width="2.0" stroke-linejoin="round" stroke-linecap="round"/>
<polyline points="871.0,134 886.1,150.8 901.3,166.5 916.5,182.2 931.7,208.4 946.9,222 962.0,238.3 977.2,244 992.4,249.7 1007.6,250.3" fill="none" stroke="#00ff00" stroke-width="2.0" stroke-linejoin="round" stroke-linecap="round"/>
<polyline points="1007.6,250.3 1022.8,250.3 1037.9,243 1053.1,252.4" fill="none" stroke="#ff0000" stroke-width="2.0" stroke-linejoin="round" stroke-linecap="round"/>
<polyline points="1053.1,252.4 1068.3,264.5 1083.5,284.9 1098.7,286.6" fill="none" stroke="#00ff00" stroke-width="2.0" stroke-linejoin="round" stroke-linecap="round"/>
<polyline points="1098.7,286.6 1113.8,286.6 1129.0,277.3 1144.2,267.6 1159.4,266.5 1174.6,265.4 1189.7,273.3" fill="none" stroke="#ff0000" stroke-width="2.0" stroke-linejoin="round" stroke-linecap="round"/>
<polyline points="1189.7,273.3 1204.9,277.1 1220.1,292.2" fill="none" stroke="#00ff00" stroke-width="2.0" stroke-linejoin="round" stroke-linecap="round"/>
<polyline points="1220.1,292.2 1235.3,290.1 1250.5,287.6 1265.6,283.8 1280.8,296.4" fill="none" stroke="#ff0000" stroke-width="2.0" stroke-linejoin="round" stroke-linecap="round"/>
<polyline points="1280.8,296.4 1296.0,299.5" fill="none" stroke="#00ff00" stroke-width="2.0" stroke-linejoin="round" stroke-linecap="round"/>
<polyline points="1296.0,299.5 1311.2,300 1326.4,293.5 1341.5,284 1356.7,258 1371.9,241.2 1387.1,233.2 1402.3,239.2 1417.4,239.6 1432.6,240.6 1447.8,242.4 1463.0,241.4 1478.2,211 1493.3,184.3 1508.5,162.4" fill="none" stroke="#ff0000" stroke-width="2.0" stroke-linejoin="round" stroke-linecap="round"/>
<path d="M36.1 330.0V351.0" stroke="#ff0000" stroke-width="1.4"/>
<rect x="29.4" y="330.0" width="13.4" height="19.8" fill="#ff00ff"/>
<rect x="31.4" y="330.0" width="9.4" height="19.8" fill="#ff0000"/>
<rect x="379.5" y="369.6" width="11.4" height="18.7" fill="#ff0000"/>
<rect x="383.6" y="369.6" width="3.2" height="18.7" fill="#ffff00"/>
<path d="M415.6 356.1V373.9" stroke="#ff0000" stroke-width="1.4"/>
<rect x="408.9" y="356.1" width="13.4" height="17.8" fill="#ff00ff"/>
<rect x="410.9" y="356.1" width="9.4" height="17.8" fill="#ff0000"/>
<path d="M461.1 290.5V327.8" stroke="#ff0000" stroke-width="1.4"/>
<rect x="455.4" y="294.3" width="11.4" height="33.5" fill="#ffff00" stroke="#ff3030" stroke-width="1"/>
<path d="M476.3 279.0V310.6" stroke="#ff0000" stroke-width="1.4"/>
<rect x="469.6" y="281.3" width="13.4" height="23.5" fill="#ff00ff"/>
<rect x="471.6" y="281.3" width="9.4" height="23.5" fill="#ff0000"/>
<rect x="469.6" y="304.8" width="13.4" height="5.8" fill="#0000ff"/>
<path d="M476.3 304.8V310.6" stroke="#ff0000" stroke-width="1.2"/>
<path d="M612.9 282.1V296.8" stroke="#ff0000" stroke-width="1.4"/>
<rect x="606.2" y="285.9" width="13.4" height="4.6" fill="#ff00ff"/>
<rect x="606.2" y="290.5" width="13.4" height="6.3" fill="#0000ff"/>
<rect x="610.3" y="286.9" width="5.2" height="3.6" fill="#ff0000"/>
<path d="M612.9 290.5V294.8" stroke="#00ff00" stroke-width="1.2"/>
<path d="M719.2 261.4V289.0" stroke="#ff0000" stroke-width="1.4"/>
<rect x="713.5" y="261.4" width="11.4" height="12.4" fill="#ffff00" stroke="#ff3030" stroke-width="1"/>
<path d="M795.1 142.4V173.8" stroke="#ff0000" stroke-width="1.4"/>
<rect x="789.4" y="142.4" width="11.4" height="17.8" fill="#ffff00" stroke="#ff3030" stroke-width="1"/>
<path d="M810.2 181.1V202.7" stroke="#ff0000" stroke-width="1.4"/>
<rect x="803.5" y="181.1" width="13.4" height="13.7" fill="#ff00ff"/>
<rect x="805.5" y="181.1" width="9.4" height="13.7" fill="#ff0000"/>
<rect x="803.5" y="194.8" width="13.4" height="7.9" fill="#0000ff"/>
<path d="M810.2 194.8V202.7" stroke="#ff0000" stroke-width="1.2"/>
<path d="M1371.9 232.0V255.6" stroke="#ff0000" stroke-width="1.4"/>
<rect x="1365.2" y="241.4" width="13.4" height="10.2" fill="#ff00ff"/>
<rect x="1367.2" y="241.4" width="9.4" height="10.2" fill="#ff0000"/>
<rect x="1365.2" y="251.6" width="13.4" height="4.0" fill="#0000ff"/>
<path d="M1371.9 251.6V255.6" stroke="#ff0000" stroke-width="1.2"/>
<path d="M1432.6 241.4V271.3" stroke="#ff0000" stroke-width="1.4"/>
<rect x="1425.9" y="246.6" width="13.4" height="10.4" fill="#ff00ff"/>
<rect x="1425.9" y="257.0" width="13.4" height="14.3" fill="#0000ff"/>
<rect x="1430.0" y="247.6" width="5.2" height="9.4" fill="#ff0000"/>
<path d="M1432.6 257.0V269.3" stroke="#00ff00" stroke-width="1.2"/>
<path d="M1478.2 161.8V227.1" stroke="#ff0000" stroke-width="1.4"/>
<rect x="1472.5" y="189.6" width="11.4" height="37.5" fill="#ffff00" stroke="#ff3030" stroke-width="1"/>
<path d="M1357.3 218.4H1448.6V278L1357.3 218.4" fill="none" stroke="#0000ff" stroke-width="1.8" stroke-linejoin="miter"/>
<ellipse cx="521.8" cy="265.4" rx="3" ry="1.4" fill="#ff00ff"/>
<ellipse cx="552.2" cy="239.8" rx="3" ry="1.4" fill="#ff00ff"/>
<ellipse cx="1174.6" cy="297.4" rx="3" ry="1.4" fill="#ff00ff"/>
<path d="M29.5 310.0h14l-7.0 9z" fill="#00ff00"/>
<path d="M408.6 337.0h14l-7.0 9z" fill="#00ff00"/>
<path d="M469.4 259.0h14l-7.0 9z" fill="#00ff00"/>
<path d="M1365.0 219.0h14l-7.0 9z" fill="#00ff00"/>
<path d="M36.5 319.0v6" stroke="#00ff00" stroke-width="1.3"/><path d="M32.0 323.0h9l-4.5 6z" fill="#00ff00"/>
<path d="M66.4 360.0v6" stroke="#00ff00" stroke-width="1.3"/><path d="M61.9 364.0h9l-4.5 6z" fill="#00ff00"/>
<path d="M233.4 382.0v6" stroke="#00ff00" stroke-width="1.3"/><path d="M228.9 386.0h9l-4.5 6z" fill="#00ff00"/>
<path d="M294.1 392.0v6" stroke="#00ff00" stroke-width="1.3"/><path d="M289.6 396.0h9l-4.5 6z" fill="#00ff00"/>
<path d="M506.6 276.0v6" stroke="#00ff00" stroke-width="1.3"/><path d="M502.1 280.0h9l-4.5 6z" fill="#00ff00"/>
<path d="M506.6 285.0v6" stroke="#00ff00" stroke-width="1.3"/><path d="M502.1 289.0h9l-4.5 6z" fill="#00ff00"/>
<path d="M567.4 266.0v6" stroke="#00ff00" stroke-width="1.3"/><path d="M562.9 270.0h9l-4.5 6z" fill="#00ff00"/>
<path d="M567.4 274.0v6" stroke="#00ff00" stroke-width="1.3"/><path d="M562.9 278.0h9l-4.5 6z" fill="#00ff00"/>
<path d="M582.5 275.0v6" stroke="#00ff00" stroke-width="1.3"/><path d="M578.0 279.0h9l-4.5 6z" fill="#00ff00"/>
<path d="M643.3 273.0v6" stroke="#00ff00" stroke-width="1.3"/><path d="M638.8 277.0h9l-4.5 6z" fill="#00ff00"/>
<path d="M749.5 271.0v6" stroke="#00ff00" stroke-width="1.3"/><path d="M745.0 275.0h9l-4.5 6z" fill="#00ff00"/>
<path d="M810.2 168.0v6" stroke="#00ff00" stroke-width="1.3"/><path d="M805.7 172.0h9l-4.5 6z" fill="#00ff00"/>
<path d="M871.0 147.0v6" stroke="#00ff00" stroke-width="1.3"/><path d="M866.5 151.0h9l-4.5 6z" fill="#00ff00"/>
<path d="M1053.1 268.0v6" stroke="#00ff00" stroke-width="1.3"/><path d="M1048.6 272.0h9l-4.5 6z" fill="#00ff00"/>
<path d="M1189.7 277.0v6" stroke="#00ff00" stroke-width="1.3"/><path d="M1185.2 281.0h9l-4.5 6z" fill="#00ff00"/>
<path d="M1432.6 244.0v6" stroke="#00ff00" stroke-width="1.3"/><path d="M1428.1 248.0h9l-4.5 6z" fill="#00ff00"/>
<path d="M415.6 346.0v6" stroke="#00ff00" stroke-width="1.3"/><path d="M411.1 350.0h9l-4.5 6z" fill="#00ff00"/>
<path d="M1371.9 229.0v6" stroke="#00ff00" stroke-width="1.3"/><path d="M1367.4 233.0h9l-4.5 6z" fill="#00ff00"/>
<path d="M157.5 408.0v-7" stroke="#ff0000" stroke-width="1.6"/><path d="M153.0 402.0h9l-4.5 -6z" fill="#ff0000"/>
<path d="M187.9 408.0v-7" stroke="#ff0000" stroke-width="1.6"/><path d="M183.4 402.0h9l-4.5 -6z" fill="#ff0000"/>
<path d="M187.9 416.0v-7" stroke="#ff0000" stroke-width="1.6"/><path d="M183.4 410.0h9l-4.5 -6z" fill="#ff0000"/>
<path d="M552.2 301.0v-7" stroke="#ff0000" stroke-width="1.6"/><path d="M547.7 295.0h9l-4.5 -6z" fill="#ff0000"/>
<path d="M704.0 303.0v-7" stroke="#ff0000" stroke-width="1.6"/><path d="M699.5 297.0h9l-4.5 -6z" fill="#ff0000"/>
<path d="M764.7 301.0v-7" stroke="#ff0000" stroke-width="1.6"/><path d="M760.2 295.0h9l-4.5 -6z" fill="#ff0000"/>
<path d="M1113.8 306.0v-7" stroke="#ff0000" stroke-width="1.6"/><path d="M1109.3 300.0h9l-4.5 -6z" fill="#ff0000"/>
<path d="M1326.4 326.0v-7" stroke="#ff0000" stroke-width="1.6"/><path d="M1321.9 320.0h9l-4.5 -6z" fill="#ff0000"/>
<path d="M1326.4 334.0v-7" stroke="#ff0000" stroke-width="1.6"/><path d="M1321.9 328.0h9l-4.5 -6z" fill="#ff0000"/>
<path d="M1417.4 278.0v-7" stroke="#ff0000" stroke-width="1.6"/><path d="M1412.9 272.0h9l-4.5 -6z" fill="#ff0000"/>
<path d="M1463.0 269.0v-7" stroke="#ff0000" stroke-width="1.6"/><path d="M1458.5 263.0h9l-4.5 -6z" fill="#ff0000"/>
<path d="M339.7 417.0v-7" stroke="#ff0000" stroke-width="1.6"/><path d="M335.2 411.0h9l-4.5 -6z" fill="#ff0000"/>
<path d="M385.2 408.0v-7" stroke="#ff0000" stroke-width="1.6"/><path d="M380.7 402.0h9l-4.5 -6z" fill="#ff0000"/>
<path d="M14.9 385.0h12l-6.0 -9z" fill="#ff0000"/>
<path d="M212.2 407.0h12l-6.0 -9z" fill="#ff0000"/>
<path d="M379.2 420.0h12l-6.0 -9z" fill="#ff0000"/>
<path d="M1351.4 291.0h12l-6.0 -9z" fill="#ff0000"/>
<path d="M1216.0 349.0h8l-4.0 -6z" fill="#ff8040"/>
<path d="M21.5 372.0c-2 -5 -8 -7 -8 -3c0 3 3 4 5 4c-3 0 -5 4 -2 5c2 1 4 -2 5 -5c1 3 3 6 5 5c3 -1 1 -5 -2 -5c2 0 5 -1 5 -4c0 -4 -6 -2 -8 3z" fill="#ff5030"/>
<path d="M157.5 416.0c-2 -5 -8 -7 -8 -3c0 3 3 4 5 4c-3 0 -5 4 -2 5c2 1 4 -2 5 -5c1 3 3 6 5 5c3 -1 1 -5 -2 -5c2 0 5 -1 5 -4c0 -4 -6 -2 -8 3z" fill="#40e0f0"/>
<path d="M461.5 357.0c-2 -5 -8 -7 -8 -3c0 3 3 4 5 4c-3 0 -5 4 -2 5c2 1 4 -2 5 -5c1 3 3 6 5 5c3 -1 1 -5 -2 -5c2 0 5 -1 5 -4c0 -4 -6 -2 -8 3z" fill="#ff5030"/>
<path d="M522.0 342.0c-2 -5 -8 -7 -8 -3c0 3 3 4 5 4c-3 0 -5 4 -2 5c2 1 4 -2 5 -5c1 3 3 6 5 5c3 -1 1 -5 -2 -5c2 0 5 -1 5 -4c0 -4 -6 -2 -8 3z" fill="#40e0f0"/>
<path d="M582.5 323.0c-2 -5 -8 -7 -8 -3c0 3 3 4 5 4c-3 0 -5 4 -2 5c2 1 4 -2 5 -5c1 3 3 6 5 5c3 -1 1 -5 -2 -5c2 0 5 -1 5 -4c0 -4 -6 -2 -8 3z" fill="#40e0f0"/>
<path d="M719.0 309.0c-2 -5 -8 -7 -8 -3c0 3 3 4 5 4c-3 0 -5 4 -2 5c2 1 4 -2 5 -5c1 3 3 6 5 5c3 -1 1 -5 -2 -5c2 0 5 -1 5 -4c0 -4 -6 -2 -8 3z" fill="#ff5030"/>
<path d="M764.5 309.0c-2 -5 -8 -7 -8 -3c0 3 3 4 5 4c-3 0 -5 4 -2 5c2 1 4 -2 5 -5c1 3 3 6 5 5c3 -1 1 -5 -2 -5c2 0 5 -1 5 -4c0 -4 -6 -2 -8 3z" fill="#40e0f0"/>
<path d="M1176.0 305.0c-2 -5 -8 -7 -8 -3c0 3 3 4 5 4c-3 0 -5 4 -2 5c2 1 4 -2 5 -5c1 3 3 6 5 5c3 -1 1 -5 -2 -5c2 0 5 -1 5 -4c0 -4 -6 -2 -8 3z" fill="#40e0f0"/>
<path d="M1463.5 281.0c-2 -5 -8 -7 -8 -3c0 3 3 4 5 4c-3 0 -5 4 -2 5c2 1 4 -2 5 -5c1 3 3 6 5 5c3 -1 1 -5 -2 -5c2 0 5 -1 5 -4c0 -4 -6 -2 -8 3z" fill="#40e0f0"/>
<path d="M1493.5 206.0c-2 -5 -8 -7 -8 -3c0 3 3 4 5 4c-3 0 -5 4 -2 5c2 1 4 -2 5 -5c1 3 3 6 5 5c3 -1 1 -5 -2 -5c2 0 5 -1 5 -4c0 -4 -6 -2 -8 3z" fill="#ff5030"/>
<path d="M1326.5 327.0c-2 -5 -8 -7 -8 -3c0 3 3 4 5 4c-3 0 -5 4 -2 5c2 1 4 -2 5 -5c1 3 3 6 5 5c3 -1 1 -5 -2 -5c2 0 5 -1 5 -4c0 -4 -6 -2 -8 3z" fill="#ff3020"/>
<path d="M385.5 405.0c-2 -5 -8 -7 -8 -3c0 3 3 4 5 4c-3 0 -5 4 -2 5c2 1 4 -2 5 -5c1 3 3 6 5 5c3 -1 1 -5 -2 -5c2 0 5 -1 5 -4c0 -4 -6 -2 -8 3z" fill="#ffc020"/>
<path d="M196.5 389.0l3 -3.500h7l3 3.500l-6.500 8z" fill="#e83838" stroke="#ffb4b4" stroke-width=".8"/><path d="M196.5 389.0h13M200.5 385.5l-1 3.500 3.500 8 3.500-8-1-3.500" fill="none" stroke="#ffc8c8" stroke-width=".6"/>
<path d="M378.5 392.0l3 -3.500h7l3 3.500l-6.500 8z" fill="#e83838" stroke="#ffb4b4" stroke-width=".8"/><path d="M378.5 392.0h13M382.5 388.5l-1 3.500 3.500 8 3.500-8-1-3.500" fill="none" stroke="#ffc8c8" stroke-width=".6"/>
<path d="M1077.0 333.0l3 -3.500h7l3 3.500l-6.500 8z" fill="#e83838" stroke="#ffb4b4" stroke-width=".8"/><path d="M1077.0 333.0h13M1081.0 329.5l-1 3.500 3.500 8 3.500-8-1-3.500" fill="none" stroke="#ffc8c8" stroke-width=".6"/>
<path d="M1228.8 327.0l3 -3.500h7l3 3.500l-6.500 8z" fill="#e83838" stroke="#ffb4b4" stroke-width=".8"/><path d="M1228.8 327.0h13M1232.8 323.5l-1 3.500 3.500 8 3.500-8-1-3.500" fill="none" stroke="#ffc8c8" stroke-width=".6"/>
<path d="M1304.5 315.0l3 -3.500h7l3 3.500l-6.500 8z" fill="#e83838" stroke="#ffb4b4" stroke-width=".8"/><path d="M1304.5 315.0h13M1308.5 311.5l-1 3.500 3.500 8 3.500-8-1-3.500" fill="none" stroke="#ffc8c8" stroke-width=".6"/>
<circle cx="461.5" cy="340.5" r="6.6" fill="#e61e1e" stroke="#ffc8c8" stroke-width=".8"/><text x="461.5" y="344.1" font-size="10" font-weight="bold" fill="#ffffff" text-anchor="middle" font-family="Liberation Sans, Noto Sans CJK SC, sans-serif">多</text>
<circle cx="719.2" cy="294.5" r="6.6" fill="#e61e1e" stroke="#ffc8c8" stroke-width=".8"/><text x="719.2" y="298.1" font-size="10" font-weight="bold" fill="#ffffff" text-anchor="middle" font-family="Liberation Sans, Noto Sans CJK SC, sans-serif">多</text>
<circle cx="1235.5" cy="338.5" r="6.6" fill="#e61e1e" stroke="#ffc8c8" stroke-width=".8"/><text x="1235.5" y="342.1" font-size="10" font-weight="bold" fill="#ffffff" text-anchor="middle" font-family="Liberation Sans, Noto Sans CJK SC, sans-serif">托</text>
<circle cx="1311.5" cy="327.0" r="6.6" fill="#e61e1e" stroke="#ffc8c8" stroke-width=".8"/><text x="1311.5" y="330.6" font-size="10" font-weight="bold" fill="#ffffff" text-anchor="middle" font-family="Liberation Sans, Noto Sans CJK SC, sans-serif">托</text>
<circle cx="1478.5" cy="233.5" r="6.6" fill="#e61e1e" stroke="#ffc8c8" stroke-width=".8"/><text x="1478.5" y="237.1" font-size="10" font-weight="bold" fill="#ffffff" text-anchor="middle" font-family="Liberation Sans, Noto Sans CJK SC, sans-serif">多</text>
<rect x="80" y="71" width="2.5" height="2.5" fill="#ff00ff"/>
<rect x="95" y="71" width="2.5" height="2.5" fill="#ff00ff"/>
<rect x="141" y="71" width="2.5" height="2.5" fill="#ff00ff"/>
<rect x="171" y="71" width="2.5" height="2.5" fill="#ff00ff"/>
<rect x="186" y="71" width="2.5" height="2.5" fill="#ff00ff"/>
<rect x="202" y="71" width="2.5" height="2.5" fill="#ff00ff"/>
<rect x="217" y="71" width="2.5" height="2.5" fill="#ff00ff"/>
<rect x="308" y="71" width="2.5" height="2.5" fill="#ff00ff"/>
<rect x="323" y="71" width="2.5" height="2.5" fill="#ff00ff"/>
<rect x="353" y="71" width="2.5" height="2.5" fill="#ff00ff"/>
<rect x="703" y="71" width="2.5" height="2.5" fill="#ff00ff"/>
<rect x="718" y="71" width="2.5" height="2.5" fill="#ff00ff"/>
<rect x="733" y="71" width="2.5" height="2.5" fill="#ff00ff"/>
<rect x="795" y="71" width="2.5" height="2.5" fill="#ff00ff"/>
<rect x="810" y="71" width="2.5" height="2.5" fill="#ff00ff"/>
<rect x="961" y="71" width="2.5" height="2.5" fill="#ff00ff"/>
<rect x="1067" y="71" width="2.5" height="2.5" fill="#ff00ff"/>
<rect x="1128" y="71" width="2.5" height="2.5" fill="#ff00ff"/>
<rect x="1371" y="71" width="2.5" height="2.5" fill="#ff00ff"/>
<rect x="1447" y="71" width="2.5" height="2.5" fill="#ff00ff"/>
<path d="M840.5 104v7M840.5 104l8 3-8 2" stroke="#c0c0c0" stroke-width="1" fill="none"/>
<path d="M128 411h9M128 411l4-3M128 411l4 3" stroke="#c0c0c0" stroke-width="1" fill="none"/>
</svg>
<div id="title"><svg class="abs" style="left:14px;top:3px" width="24" height="24" viewBox="0 0 24 24"><circle cx="12" cy="12" r="10.3" fill="none" stroke="#fff" stroke-width="3" stroke-dasharray="29.300 3 29.300 3" stroke-dashoffset="-14"/><path d="M19.500 8.500H11.800c-3.600 0-4.300 3.600-1 3.600h2.600c3.400 0 2.600 3.600-1 3.600H4.800" stroke="#fff" stroke-width="2.500" fill="none"/></svg><div class="m b" style="left:41px;top:7px;font-size:15px;letter-spacing:-.5px;color:#fff">国盛睿</div><div class="m" style="left:152px">首页</div><div class="m" style="left:205px">自选</div><div class="m" style="left:259px">行情</div><div class="m" style="left:313px">发现</div><div class="m" style="left:362px">数据</div><div class="m" style="left:415px">资讯</div><div class="m" style="left:469px">交易</div><div class="m" style="left:522px">理财商城</div><div class="m" style="left:600px">业务办理</div><div class="m" style="left:678px">国盛特色</div><div class="m" style="left:756px">账户分析</div><div class="m" style="left:834px">条件单</div><div class="abs" style="left:457px;top:28px;width:54px;height:2px;background:#5b8def"></div><div class="wb" style="left:1694px"><svg width="20" height="20" viewBox="0 0 20 20"><path d="M10 4.500a5.200 5 0 1 1-3.300 8.900l-2.200 1.800.6-2.800a5.200 5 0 0 1 4.900-7.900z" fill="none" stroke="#d0d0d0" stroke-width="1.500"/><circle cx="8.300" cy="9.300" r=".9" fill="#d0d0d0"/><circle cx="11.700" cy="9.300" r=".9" fill="#d0d0d0"/></svg></div><div class="wb" style="left:1722px"><svg width="20" height="20" viewBox="0 0 20 20"><path d="M4 7.500h12M4 13h12" stroke="#d0d0d0" stroke-width="1.500"/><path d="M8 5.500v4M12.500 11v4" stroke="#d0d0d0" stroke-width="1.800"/></svg></div><div class="wb" style="left:1750px"><svg width="20" height="20" viewBox="0 0 20 20"><path d="M4 15.500c1.500 0 2.500-1 3.500-5.500s2-5.500 4.500-5.500M5.500 9.500h6M10.500 10.500l5 5.500M15.500 10.500l-5 5.500" stroke="#d0d0d0" stroke-width="1.500" fill="none"/></svg></div><div class="wb" style="left:1778px"><svg width="20" height="20" viewBox="0 0 20 20"><rect x="5" y="4.500" width="10" height="7.500" fill="none" stroke="#d0d0d0" stroke-width="1.500"/><path d="M6.500 15.500h7" stroke="#d0d0d0" stroke-width="1.500"/></svg></div><div class="wb" style="left:1806px"><svg width="20" height="20" viewBox="0 0 20 20"><path d="M7.500 4.500l-4 2.800 1.500 2.500 1.800-1v6.700h6.400v-6.700l1.800 1 1.500-2.500-4-2.800c-.8 1.500-4.200 1.500-5 0z" fill="none" stroke="#d0d0d0" stroke-width="1.500" stroke-linejoin="round"/></svg></div><div class="wb" style="left:1834px"><svg width="20" height="20" viewBox="0 0 20 20"><path d="M6.500 15.500h7" stroke="#d0d0d0" stroke-width="1.600"/></svg></div><div class="wb" style="left:1862px"><svg width="20" height="20" viewBox="0 0 20 20"><path d="M10.500 4v5.500h5.500M4 10.800h5.500v5.200" stroke="#d0d0d0" stroke-width="1.600" fill="none"/></svg></div><div class="wb" style="left:1890px"><svg width="20" height="20" viewBox="0 0 20 20"><path d="M5 5l10 10M15 5l-10 10" stroke="#d0d0d0" stroke-width="1.600"/></svg></div></div>
<svg class="abs" style="left:3px;top:34px" width="16" height="14" viewBox="0 0 16 14"><rect x="1" y="1.5" width="13" height="10" rx="2" fill="none" stroke="#a0a0a0" stroke-width="1.3"/><rect x="8" y="3.5" width="4" height="6" fill="#a0a0a0"/></svg><div class="vl" style="left:22px;top:32px;height:19px;"></div><div class="pt" style="left:27px">分时</div><div class="pt" style="left:60px">1分钟</div><div class="pt" style="left:99px">5分钟</div><div class="pt" style="left:138px">15分钟</div><div class="pt" style="left:184px">30分钟</div><div class="pt" style="left:230px">60分钟</div><div class="pt" style="left:276px;color:#5cffff">日线</div><div class="pt" style="left:311px">周线</div><div class="pt" style="left:345px">月线</div><div class="pt" style="left:378px">10分钟</div><div class="pt" style="left:424px">45日线</div><div class="pt" style="left:470px">季线</div><div class="pt" style="left:504px">年线</div><div class="pt" style="left:541px">5秒</div><div class="pt" style="left:572px">15秒</div><div class="pt" style="left:605px">多周期</div><div class="pt" style="left:650px">更多&gt;</div><div class="vl" style="left:1298px;top:32px;height:19px;"></div><div class="pt" style="left:1299px;width:33px;text-align:center">复权</div><div class="vl" style="left:1332px;top:32px;height:19px;"></div><div class="pt" style="left:1333px;width:33px;text-align:center">叠加</div><div class="vl" style="left:1366px;top:32px;height:19px;"></div><div class="pt" style="left:1367px;width:35px;text-align:center">多股</div><div class="vl" style="left:1402px;top:32px;height:19px;"></div><div class="pt" style="left:1403px;width:33px;text-align:center">统计</div><div class="vl" style="left:1436px;top:32px;height:19px;"></div><div class="pt" style="left:1437px;width:35px;text-align:center">画线</div><div class="vl" style="left:1472px;top:32px;height:19px;"></div><div class="pt" style="left:1473px;width:34px;text-align:center">F10</div><div class="vl" style="left:1507px;top:32px;height:19px;"></div><div class="pt" style="left:1508px;width:34px;text-align:center">标记</div><div class="vl" style="left:1542px;top:32px;height:19px;"></div><div class="pt" style="left:1543px;width:34px;text-align:center">-自选</div><div class="vl" style="left:1577px;top:32px;height:19px;"></div><div class="pt" style="left:1578px;width:36px;text-align:center">返回</div><div class="hl" style="left:0px;top:51px;width:1614px;"></div>
<div class="t " style="left:2px;top:54px;font-size:12px;font-weight:bold;color:#5cffff;line-height:14px"><span style="font-size:13px">山金国际</span></div>
<div class="t " style="left:54px;top:54px;font-size:12px;font-weight:bold;color:#d8d8d8;line-height:14px">(<span style="font-size:13px">日线</span>.<span style="font-size:13px">等比前复权</span>)</div>
<div class="t " style="left:178px;top:54px;font-size:12px;font-weight:bold;color:#c0c0c0;line-height:14px"><span style="font-size:13px">擒龙</span></div>
<div class="t " style="left:208px;top:54px;font-size:12px;font-weight:bold;color:#00ff00;line-height:14px">DK: 24.99</div>
<div class="t " style="left:265px;top:54px;"><svg width="7" height="13" viewBox="0 0 7 13" style="vertical-align:-2px"><path d="M3.5 12.500V1M1 4.500L3.500 1 6 4.500" stroke="#ff3232" stroke-width="1.1" fill="none"/></svg></div>
<div class="t " style="left:276px;top:54px;font-size:12px;font-weight:bold;color:#ff00ff;line-height:14px">: 24.99</div>
<div class="t " style="left:317px;top:54px;"><svg width="7" height="13" viewBox="0 0 7 13" style="vertical-align:-2px"><path d="M3.5 12.500V1M1 4.500L3.500 1 6 4.500" stroke="#ff3232" stroke-width="1.1" fill="none"/></svg></div>
<div class="t " style="left:328px;top:54px;font-size:12px;font-weight:bold;color:#ff0000;line-height:14px">UP: 24.50</div>
<div class="t " style="left:385px;top:54px;"><svg width="7" height="13" viewBox="0 0 7 13" style="vertical-align:-2px"><path d="M3.5 12.500V1M1 4.500L3.500 1 6 4.500" stroke="#ff3232" stroke-width="1.1" fill="none"/></svg></div>
<div class="t " style="left:396px;top:54px;font-size:12px;font-weight:bold;color:#00ff00;line-height:14px">DOWN: -</div>
<div class="t " style="left:448px;top:54px;font-size:12px;font-weight:bold;color:#8000ff;line-height:14px">VAR2: 1.00</div>
<div class="t " style="left:514px;top:54px;font-size:12px;font-weight:bold;color:#ffffff;line-height:14px">VAR1: 1.00</div>
<div class="t " style="left:580px;top:54px;font-size:12px;font-weight:bold;color:#ffff00;line-height:14px">VAR3: 0.00</div>
<div class="t " style="left:647px;top:54px;font-size:12px;font-weight:bold;color:#ff00ff;line-height:14px"><span style="font-size:13px">捉妖</span>: 0.00</div>
<div class="t " style="left:708px;top:54px;font-size:12px;font-weight:bold;color:#00ff00;line-height:14px"><span style="font-size:13px">擒龙</span>: 0.00</div>
<div class="t " style="left:769px;top:54px;font-size:12px;font-weight:bold;color:#00ffff;line-height:14px"><span style="font-size:13px">换手率</span>: 2.20<svg width="7" height="13" viewBox="0 0 7 13" style="vertical-align:-2px"><path d="M3.500 .5V12M1 8.500L3.500 12 6 8.500" stroke="#00ffff" stroke-width="1.1" fill="none"/></svg></div>
<div class="t " style="left:852px;top:54px;font-size:12px;font-weight:bold;color:#0000ff;line-height:14px"><span style="font-size:13px">筹码参数</span>: 1.69</div>
<div class="t " style="left:940px;top:54px;font-size:12px;font-weight:bold;color:#ffffff;line-height:14px"><span style="font-size:13px">获利比例</span>: -</div>
<div class="t " style="left:1007px;top:54px;font-size:12px;font-weight:bold;color:#ffff00;line-height:14px"><span style="font-size:13px">换手</span>: 40.48</div>
<div class="t " style="left:1074px;top:54px;"><svg width="7" height="13" viewBox="0 0 7 13" style="vertical-align:-2px"><path d="M3.5 12.500V1M1 4.500L3.500 1 6 4.500" stroke="#ff3232" stroke-width="1.1" fill="none"/></svg></div>
<div class="t " style="left:1085px;top:54px;font-size:12px;font-weight:bold;color:#ff00ff;line-height:14px"><span style="font-size:13px">趋势高点</span>: 24.65</div>
<div class="t " style="left:1179px;top:54px;"><svg width="7" height="13" viewBox="0 0 7 13" style="vertical-align:-2px"><path d="M3.5 12.500V1M1 4.500L3.500 1 6 4.500" stroke="#ff3232" stroke-width="1.1" fill="none"/></svg></div>
<div class="t " style="left:1189px;top:54px;font-size:12px;font-weight:bold;color:#ffff00;line-height:14px"><span style="font-size:13px">见底</span>: 20.44</div>
<div class="t " style="left:1257px;top:54px;font-size:12px;font-weight:bold;color:#ff0000;line-height:14px"><span style="font-size:13px">镜三角画完出局</span>:</div>
<div class="t " style="left:1356px;top:54px;font-size:12px;font-weight:bold;color:#0000ff;line-height:14px"><span style="font-size:13px">蓝三角画完介入</span>:</div>
<svg class="abs" style="left:162px;top:55px" width="12" height="12"><circle cx="6" cy="6" r="5.5" fill="#808080"/><path d="M3.2 5l2.8 2.8L8.8 5" stroke="#202020" stroke-width="1.4" fill="none"/></svg>
<svg class="abs" style="left:1527px;top:54px" width="36" height="14"><path d="M7 2l4.5 5L7 12 2.5 7z" fill="none" stroke="#909090" stroke-width="1"/><rect x="22" y="2.5" width="11" height="9" rx="2" fill="none" stroke="#a0a0a0" stroke-width="1.2"/><rect x="28" y="4" width="3.5" height="6" fill="#a0a0a0"/></svg>
<div class="t " style="left:16px;top:75px;font-size:12px;font-weight:bold;color:#ff0000;line-height:14px"><span style="font-size:13px">行业</span>:</div>
<div class="t " style="left:79px;top:75px;font-size:12px;font-weight:bold;color:#ffff00;line-height:14px"><span style="font-size:13px">黄金</span></div>
<div class="t " style="left:16px;top:101px;font-size:12px;font-weight:bold;color:#ff0000;line-height:14px"><span style="font-size:13px">概念</span>:</div>
<div class="t " style="left:79px;top:101px;font-size:12px;font-weight:bold;color:#ffff00;line-height:14px"><span style="font-size:13px">黄金概念</span></div>
<div class="t " style="left:16px;top:127px;font-size:12px;font-weight:bold;color:#ff0000;line-height:14px"><span style="font-size:13px">地区</span>:</div>
<div class="t " style="left:79px;top:127px;font-size:12px;font-weight:bold;color:#ffff00;line-height:14px"><span style="font-size:13px">内蒙板块</span></div>
<div class="t " style="left:16px;top:154px;font-size:12px;font-weight:bold;color:#ff0000;line-height:14px"><span style="font-size:13px">风格</span>:</div>
<div class="t " style="left:79px;top:154px;font-size:12px;font-weight:bold;color:#ffff00;line-height:14px;letter-spacing:-.17px"><span style="font-size:13px">融资融券</span> <span style="font-size:13px">高分红股</span> <span style="font-size:13px">保险重仓</span> QFII<span style="font-size:13px">重仓</span> QFII<span style="font-size:13px">新进</span> <span style="font-size:13px">社保重仓</span> <span style="font-size:13px">基金重仓</span> <span style="font-size:13px">私募重仓</span> <span style="font-size:13px">绩优股</span> <span style="font-size:13px">回购计划</span> <span style="font-size:13px">专项贷款</span> <span style="font-size:13px">深股通标的</span> MSCI<span style="font-size:13px">成份</span> <span style="font-size:13px">周期股</span></div>
<div class="t " style="left:1252px;top:155px;font-size:12px;font-weight:bold;color:#ffff00"><span style="font-size:13px">机构量化评分系统</span></div>
<div class="t " style="left:1252px;top:170px;font-size:12px;font-weight:bold;color:#ff0000"><span style="font-size:13px">机构评分：</span></div>
<div class="t " style="left:1320px;top:170px;font-size:12px;font-weight:bold;color:#ff0000">60.00</div>
<div class="t " style="left:1252px;top:185px;font-size:12px;font-weight:bold;color:#00ffff"><span style="font-size:13px">今日阻力：</span></div>
<div class="t " style="left:1320px;top:185px;font-size:12px;font-weight:bold;color:#00ffff">24.79</div>
<div class="t " style="left:1252px;top:200px;font-size:12px;font-weight:bold;color:#ff8080"><span style="font-size:13px">今日支撑：</span></div>
<div class="t " style="left:1320px;top:200px;font-size:12px;font-weight:bold;color:#ff8080">24.03</div>
<div class="t " style="left:1252px;top:215px;font-size:12px;font-weight:bold;color:#ffffff"><span style="font-size:13px">制胜巅峰</span></div>
<div class="t " style="left:853px;top:103px;font-size:12px;font-weight:bold;color:#c0c0c0">25.89</div>
<div class="t " style="left:141px;top:405px;font-size:12px;font-weight:bold;color:#c0c0c0">17.85</div>
<div class="t " style="left:394px;top:397px;font-size:12px;font-weight:bold;color:#c0c0c0">31 - 18.49</div>
<div class="t " style="left:1469px;top:239px;font-size:12px;font-weight:bold;color:#c0c0c0">22.45 - 22.68</div>
<div class="t " style="left:491px;top:321px;font-size:12px;font-weight:bold;color:#ffff00"><span style="font-size:13px">主力吸筹</span></div>
<div class="t " style="left:0px;top:438px;font-size:12px;font-weight:bold;color:#808080"><span style="font-size:13px">用到未来数据</span></div>
<div class="abs" style="left:955px;top:450px;width:13px;height:13px;background:#0a4a8c"></div>
<div class="t " style="left:955.5px;top:450.5px;font-size:12px;color:#fff">财</div>
<div class="t " style="left:335px;top:417px;font-size:12px;font-weight:bold;color:#ff2020;font-size:13px;font-weight:normal">B</div>
<div class="t " style="left:684px;top:325px;font-size:12px;font-weight:bold;color:#ff2020;font-size:13px;font-weight:normal">B</div>
<div class="t " style="left:1003px;top:284px;font-size:12px;font-weight:bold;color:#ff2020;font-size:13px;font-weight:normal">B</div>
<div class="t " style="left:1094px;top:314px;font-size:12px;font-weight:bold;color:#ff2020;font-size:13px;font-weight:normal">B</div>
<svg class="abs" style="left:1px;top:467px" width="12" height="12"><circle cx="6" cy="6" r="5.5" fill="#808080"/><path d="M3.2 5l2.8 2.8L8.8 5" stroke="#202020" stroke-width="1.4" fill="none"/></svg>
<div class="t " style="left:17px;top:466px;font-size:12px;font-weight:bold;color:#c0c0c0;line-height:14px"><span style="font-size:13px">转点</span></div>
<div class="t " style="left:48px;top:466px;font-size:12px;font-weight:bold;color:#ffffff;line-height:14px"><span style="font-size:13px">个股牛熊</span>: 63.30</div>
<div class="t " style="left:139px;top:466px;"><svg width="7" height="13" viewBox="0 0 7 13" style="vertical-align:-2px"><path d="M3.5 12.500V1M1 4.500L3.500 1 6 4.500" stroke="#ff3232" stroke-width="1.1" fill="none"/></svg></div>
<div class="t " style="left:152px;top:466px;font-size:12px;font-weight:bold;color:#ffff00;line-height:14px"><span style="font-size:13px">大盘牛熊</span>: 53.46</div>
<div class="t " style="left:242px;top:466px;"><svg width="7" height="13" viewBox="0 0 7 13" style="vertical-align:-2px"><path d="M3.500 .5V12M1 8.500L3.500 12 6 8.500" stroke="#00ffff" stroke-width="1.1" fill="none"/></svg></div>
<div class="t " style="left:257px;top:466px;font-size:12px;font-weight:bold;color:#ff0000;line-height:14px"><span style="font-size:13px">长线转强</span>: 63.30</div>
<div class="t " style="left:348px;top:466px;"><svg width="7" height="13" viewBox="0 0 7 13" style="vertical-align:-2px"><path d="M3.5 12.500V1M1 4.500L3.500 1 6 4.500" stroke="#ff3232" stroke-width="1.1" fill="none"/></svg></div>
<div class="t " style="left:361px;top:466px;font-size:12px;font-weight:bold;color:#00ff00;line-height:14px"><span style="font-size:13px">长线转弱</span>: -</div>
<div class="hl" style="left:0px;top:464px;width:1563px;"></div>
<div class="hl" style="left:1563px;top:464px;width:51px;height:2px"></div>
<div class="vl" style="left:1563px;top:52px;height:413px;"></div>
<div class="vl" style="left:1563px;top:466px;height:505px;width:2px"></div>
<div class="vl" style="left:1614px;top:31px;height:975px;width:1px"></div>
<div class="vl" style="left:1613px;top:466px;height:488px;width:2px"></div>
<div class="hl" style="left:1563px;top:72px;width:51px;"></div>
<div class="hl" style="left:1563px;top:230px;width:51px;"></div>
<div class="hl" style="left:0px;top:953px;width:1563px;"></div>
<div class="hl" style="left:1563px;top:952px;width:51px;height:2px"></div>
<div class="hl" style="left:0px;top:970px;width:1614px;"></div>
<div class="hl" style="left:0px;top:987px;width:1895px;"></div>
<div class="hl" style="left:0px;top:1005px;width:1895px;"></div>
<div class="t " style="right:307px;top:76px;font-size:12px;font-weight:bold;color:#c0c0c0">24.49</div>
<div class="t " style="right:307px;top:94px;font-size:12px;font-weight:bold;color:#e6e600">124</div>
<div class="t " style="right:307px;top:115px;font-size:12px;font-weight:bold;color:#c0c0c0">24.48</div>
<div class="t " style="right:307px;top:133px;font-size:12px;font-weight:bold;color:#e6e600">25</div>
<div class="t " style="right:307px;top:158px;font-size:12px;font-weight:bold;color:#ff3232">24.49</div>
<div class="t " style="right:307px;top:176px;font-size:12px;font-weight:bold;color:#ff3232">▲0.21</div>
<div class="t " style="right:307px;top:194px;font-size:12px;font-weight:bold;color:#ff3232">0.86%</div>
<div class="t " style="right:307px;top:212px;font-size:12px;font-weight:bold;color:#c0c0c0">2148</div>
<div class="t " style="right:311px;top:247px;font-size:12px;font-weight:bold;color:#ff3232">22.00</div>
<div class="t " style="right:311px;top:285px;font-size:12px;font-weight:bold;color:#ff3232">21.00</div>
<div class="t " style="right:311px;top:323px;font-size:12px;font-weight:bold;color:#ff3232">20.00</div>
<div class="t " style="right:311px;top:362px;font-size:12px;font-weight:bold;color:#ff3232">19.00</div>
<div class="t " style="right:311px;top:400px;font-size:12px;font-weight:bold;color:#ff3232">18.00</div>
<div class="t " style="right:311px;top:438px;font-size:12px;font-weight:bold;color:#ff3232">17.00</div>
<div class="t " style="right:311px;top:478px;font-size:12px;font-weight:bold;color:#ff3232">85.00</div>
<div class="t " style="right:311px;top:516px;font-size:12px;font-weight:bold;color:#ff3232">80.00</div>
<div class="t " style="right:311px;top:555px;font-size:12px;font-weight:bold;color:#ff3232">75.00</div>
<div class="t " style="right:311px;top:593px;font-size:12px;font-weight:bold;color:#ff3232">70.00</div>
<div class="t " style="right:311px;top:632px;font-size:12px;font-weight:bold;color:#ff3232">65.00</div>
<div class="t " style="right:311px;top:670px;font-size:12px;font-weight:bold;color:#ff3232">60.00</div>
<div class="t " style="right:311px;top:709px;font-size:12px;font-weight:bold;color:#ff3232">55.00</div>
<div class="t " style="right:311px;top:747px;font-size:12px;font-weight:bold;color:#ff3232">50.00</div>
<div class="t " style="right:311px;top:786px;font-size:12px;font-weight:bold;color:#ff3232">45.00</div>
<div class="t " style="right:311px;top:824px;font-size:12px;font-weight:bold;color:#ff3232">40.00</div>
<div class="t " style="right:311px;top:863px;font-size:12px;font-weight:bold;color:#ff3232">35.00</div>
<div class="t " style="right:311px;top:901px;font-size:12px;font-weight:bold;color:#ff3232">30.00</div>
<svg class="abs" style="left:1564px;top:52px" width="10" height="902"><g stroke="#c80000" stroke-width="1"><path d="M0 200.5h5"/><path d="M0 181.5h2"/><path d="M0 238.5h5"/><path d="M0 219.5h2"/><path d="M0 276.5h5"/><path d="M0 257.5h2"/><path d="M0 315.5h5"/><path d="M0 296.5h2"/><path d="M0 353.5h5"/><path d="M0 334.5h2"/><path d="M0 391.5h5"/><path d="M0 372.5h2"/><path d="M1 431.5h5"/><path d="M1 450.5h2"/><path d="M1 469.5h5"/><path d="M1 488.5h2"/><path d="M1 508.5h5"/><path d="M1 527.5h2"/><path d="M1 546.5h5"/><path d="M1 565.5h2"/><path d="M1 585.5h5"/><path d="M1 604.5h2"/><path d="M1 623.5h5"/><path d="M1 642.5h2"/><path d="M1 662.5h5"/><path d="M1 681.5h2"/><path d="M1 700.5h5"/><path d="M1 719.5h2"/><path d="M1 739.5h5"/><path d="M1 758.5h2"/><path d="M1 777.5h5"/><path d="M1 796.5h2"/><path d="M1 816.5h5"/><path d="M1 835.5h2"/><path d="M1 854.5h5"/><path d="M1 873.5h2"/></g></svg>
<div class="abs" style="left:1558px;top:257px;width:5px;height:1px;background:#00c000"></div>
<div class="t " style="left:4px;top:957px;font-size:12px;font-weight:bold;color:#ff3232;">2025年</div>
<div class="t " style="left:144px;top:957px;font-size:12px;font-weight:bold;color:#ff3232;">8</div>
<div class="t " style="left:463px;top:957px;font-size:12px;font-weight:bold;color:#ff3232;">9</div>
<div class="t " style="left:797px;top:957px;font-size:12px;font-weight:bold;color:#ff3232;">10</div>
<div class="t " style="left:1055px;top:957px;font-size:12px;font-weight:bold;color:#ff3232;">11</div>
<div class="t " style="left:1359px;top:957px;font-size:12px;font-weight:bold;color:#ff3232;">12</div>
<div class="vl" style="left:142px;top:954px;height:16px;"></div>
<div class="vl" style="left:461px;top:954px;height:16px;"></div>
<div class="vl" style="left:795px;top:954px;height:16px;"></div>
<div class="vl" style="left:1053px;top:954px;height:16px;"></div>
<div class="vl" style="left:1357px;top:954px;height:16px;"></div>
<svg class="abs" style="left:0;top:954px" width="1563" height="4"><g stroke="#c80000" stroke-width="1"><path d="M218.5 0v3"/><path d="M294.5 0v3"/><path d="M370.5 0v3"/><path d="M537.5 0v3"/><path d="M628.5 0v3"/><path d="M704.5 0v3"/><path d="M856.5 0v3"/><path d="M916.5 0v3"/><path d="M977.5 0v3"/><path d="M1144.5 0v3"/><path d="M1220.5 0v3"/><path d="M1296.5 0v3"/><path d="M1433.5 0v3"/></g></svg>
<div class="t " style="left:1575px;top:955px;font-size:12px;font-weight:bold;color:#c0c0c0;font-size:13px">日线</div>
<div class="tab" style="left:1px;width:41px">指标A</div>
<div class="tab" style="left:42px;width:32px">窗口</div>
<div class="tab" style="left:74px;width:34px">WOL</div>
<div class="tab" style="left:108px;width:56px">双紫檎龙</div>
<div class="tab" style="left:164px;width:56px">强势起爆</div>
<div class="tab" style="left:220px;width:32px">均线</div>
<div class="tab" style="left:252px;width:32px;color:#5cffff">擒龙</div>
<div class="tab" style="left:284px;width:56px">镇店之宝</div>
<div class="tab" style="left:340px;width:56px">飞碟妖龙</div>
<div class="tab" style="left:396px;width:45px">主进出</div>
<div class="tab" style="left:441px;width:79px">十全十美指标</div>
<div class="tab" style="left:520px;width:33px">加仓</div>
<div class="tab" style="left:553px;width:31px">转点</div>
<div class="tab" style="left:584px;width:39px">资金2</div>
<div class="tab" style="left:623px;width:45px">宁波敢</div>
<div class="tab" style="left:668px;width:30px">AI龙</div>
<div class="tab" style="left:698px;width:31px">顶底</div>
<div class="tab" style="left:729px;width:56px">资金方向</div>
<div class="tab" style="left:785px;width:44px">主控盘</div>
<div class="tab" style="left:829px;width:44px">战神号</div>
<div class="tab" style="left:873px;width:56px">动能二号</div>
<div class="tab" style="left:929px;width:44px">飞碟妖</div>
<div class="tab" style="left:973px;width:56px">财神到家</div>
<div class="tab" style="left:1029px;width:33px">暗盘</div>
<div class="tab" style="left:1062px;width:43px">全仓买</div>
<div class="tab" style="left:1105px;width:56px">游资里潮</div>
<div class="tab" style="left:1161px;width:33px">多空</div>
<div class="tab" style="left:1194px;width:55px">短线情绪</div>
<div class="tab" style="left:1249px;width:56px">神针启动</div>
<div class="tab" style="left:1305px;width:56px">冰火里能</div>
<div class="tab" style="left:1361px;width:56px">趋势多空</div>
<div class="tab" style="left:1417px;width:16px">&gt;</div>
<div class="tab" style="left:1433px;width:48px"></div>
<div class="tab" style="left:1481px;width:41px">指标B</div>
<div class="tab" style="left:1522px;width:42px">模 板</div>
<div class="tab" style="left:1564px;width:26px">+</div>
<div class="tab" style="left:1590px;width:25px">−</div>
<div class="tab2" style="left:1px;width:39px">扩展∧</div>
<div class="tab2" style="left:40px;width:57px">关联报价</div>
<div class="tab2" style="left:97px;width:56px">资金流向</div>
<div class="tab2" style="left:153px;width:55px;color:#e6e600">综合资讯</div>
<div class="tab2" style="left:208px;width:56px;color:#e6e600">板块资讯</div>
<div class="tab2" style="left:1515px;width:49px;color:#e6e600;border-left:1px solid #c80000">图文F10</div>
<div class="tab2" style="left:1564px;width:51px;color:#e6e600">侧边栏《</div>
<div class="tab2" style="left:1615px;width:31px;color:#5cffff">笔</div>
<div class="tab2" style="left:1646px;width:31px">价</div>
<div class="tab2" style="left:1677px;width:32px">细</div>
<div class="tab2" style="left:1709px;width:31px">势</div>
<div class="tab2" style="left:1740px;width:31px">联</div>
<div class="tab2" style="left:1771px;width:31px">值</div>
<div class="tab2" style="left:1802px;width:31px">主</div>
<div class="tab2" style="left:1833px;width:32px">逆</div>
<div class="tab2" style="left:1865px;width:31px;border-right:none">筹</div>
<div id="news"><div class="t" style="left:0px;font-size:12px;color:#e8e8e8;top:5px;">司解决</div><div class="t" style="left:79px;font-size:12px;color:#e8e8e8;top:5px;">财报前瞻 <span style="margin:0 3px">|</span> 即使Q1财报惊艳&nbsp; 美光(MU)的“存储超级周期”叙事仍待更</div><div class="t" style="left:689px;font-size:12px;color:#e8e8e8;top:5px;">*[发行与上市提示]债券发行与上市提示</div><div class="t" style="left:940px;font-size:12px;color:#e8e8e8;top:5px;">[临时停牌]东方智造(002175)临时停牌</div><div class="t" style="left:1184px;font-size:12px;color:#e8e8e8;top:5px;">[发行与上市提示]可转债发行与上市提示</div><div class="t" style="left:1441px;font-size:12px;color:#e8e8e8;top:5px;">[深交所公告]深市上市公司公告(2025.12.15)</div><div class="t" style="left:1720px;font-size:12px;color:#e8e8e8;top:5px;">[上交所公告]沪市上市公司公告(</div></div>
<div id="status"><svg class="abs" style="left:5px;top:5px" width="13" height="13"><circle cx="6.5" cy="6.5" r="6" fill="#5a5f6e"/><path d="M3.5 5.5l3 3 3-3" stroke="#1a1d23" stroke-width="1.5" fill="none"/></svg><div class="t" style="left:25px;font-size:14px;top:4px;color:#fff">上证</div><div class="t" style="left:60px;font-size:14px;top:4px;color:#3cc864">3867.92</div><div class="t" style="left:129px;font-size:14px;top:4px;color:#3cc864">-21.43</div><div class="t" style="left:183px;font-size:14px;top:4px;color:#3cc864">-0.55%</div><div class="t" style="left:240px;font-size:14px;top:4px;color:#fff">7646亿</div><div class="t" style="left:298px;font-size:14px;top:4px;color:#fff">深证</div><div class="t" style="left:334px;font-size:14px;top:4px;color:#3cc864">13112.09</div><div class="t" style="left:399px;font-size:14px;top:4px;color:#3cc864">-146.24</div><div class="t" style="left:457px;font-size:14px;top:4px;color:#3cc864">-1.10%</div><div class="t" style="left:514px;font-size:14px;top:4px;color:#fff">10088亿</div><div class="t" style="left:574px;font-size:14px;top:4px;color:#fff">创业</div><div class="t" style="left:609px;font-size:14px;top:4px;color:#3cc864">3137.80</div><div class="t" style="left:678px;font-size:14px;top:4px;color:#3cc864">-56.56</div><div class="t" style="left:732px;font-size:14px;top:4px;color:#3cc864">-1.77%</div><div class="t" style="left:789px;font-size:14px;top:4px;color:#fff">4721亿</div><div class="t" style="left:851px;font-size:14px;top:4px;color:#fff">总成交</div><div class="t" style="left:902px;font-size:14px;top:4px;color:#fff">17945亿</div><div class="t" style="left:1001px;font-size:14px;top:4px;color:#fff">已连接</div><div class="t" style="left:1844px;font-size:14px;top:4px;color:#fff"><span style="font-size:13px;letter-spacing:-.5px">15:39:11</span></div><svg class="abs" style="left:964px;top:4px" width="34" height="14"><circle cx="7" cy="7" r="6" fill="#5a5f6e"/><path d="M4.5 9c0-4 5-4 5-1" stroke="#1a1d23" stroke-width="1.3" fill="none"/><rect x="20" y="1" width="13" height="12" rx="3" fill="#464b5a"/><text x="26.5" y="11" font-size="10" fill="#c0c0c0" text-anchor="middle" font-family="Liberation Sans">3</text></svg><svg class="abs" style="left:1724px;top:3px" width="112" height="16"><rect x="1" y="3" width="16" height="10" rx="2" fill="#8c92a8"/><path d="M4 10h10" stroke="#1a1d23" stroke-width="1.5"/><rect x="34" y="4" width="5" height="9" fill="#5a5f6e"/><rect x="40" y="2" width="5" height="12" fill="#5a5f6e"/><circle cx="70" cy="8" r="5.5" fill="none" stroke="#5a5f6e" stroke-width="1.5"/><path d="M70 1v14M63 8h14" stroke="#5a5f6e" stroke-width="1.2"/><path d="M95 14h12l-1.5-7h-9zM95 2l2 5h8l2-5-3 2-3-2.5-3 2.5z" fill="#fff"/></svg></div>
<div class="t" style="left:1632px;top:35.5px;font-size:19px;color:#5cffff;font-family:'Liberation Sans','Noto Sans CJK SC',sans-serif;font-weight:bold">山金国际</div>
<div class="t" style="left:1713px;top:40.0px;font-size:14px;color:#c0c0c0;font-family:'Liberation Sans',sans-serif;">000975</div>
<div class="t" style="left:1764px;top:35.0px;font-size:10px;color:#ff3232;font-family:'Liberation Sans',sans-serif;font-weight:bold">R</div>
<div class="t" style="left:1760px;top:45.5px;font-size:10px;color:#ff3232;font-family:'Liberation Sans',sans-serif;letter-spacing:-.6px">300</div>
<div class="t" style="left:1617px;top:63.0px;font-size:18px;color:#ff3232;font-family:'Liberation Sans',sans-serif;font-weight:bold;letter-spacing:1px">24.49</div>
<svg class="abs" style="left:1716px;top:66px" width="14" height="13"><path d="M0 12.500L7 0l7 12.500z" fill="#ff3232"/></svg>
<div class="t" style="left:1731.5px;top:64.0px;font-size:18px;color:#ff3232;font-family:'Liberation Sans',sans-serif;font-weight:bold;letter-spacing:.6px">0.21</div>
<div class="t" style="right:27px;top:64.0px;font-size:18px;color:#ff3232;letter-spacing:.1px;font-weight:bold;letter-spacing:.6px">0.86%</div>
<div class="hl" style="left:1615px;top:86px;width:280px;"></div>
<div class="t" style="left:1617px;top:87.5px;font-size:17px;color:#e0e0e0;font-family:'Liberation Serif','Noto Sans CJK SC',serif;">卖五</div>
<div class="t" style="left:1716.5px;top:90.0px;font-size:14px;color:#ff3232;font-family:'Liberation Sans',sans-serif;letter-spacing:.1px">24.53</div>
<div class="t" style="right:27px;top:90.0px;font-size:14px;color:#e6e600;letter-spacing:.1px;">205</div>
<div class="t" style="left:1617px;top:105.5px;font-size:17px;color:#e0e0e0;font-family:'Liberation Serif','Noto Sans CJK SC',serif;">卖四</div>
<div class="t" style="left:1716.5px;top:108.0px;font-size:14px;color:#ff3232;font-family:'Liberation Sans',sans-serif;letter-spacing:.1px">24.52</div>
<div class="t" style="right:27px;top:108.0px;font-size:14px;color:#e6e600;letter-spacing:.1px;">100</div>
<div class="t" style="left:1617px;top:123.5px;font-size:17px;color:#e0e0e0;font-family:'Liberation Serif','Noto Sans CJK SC',serif;">卖三</div>
<div class="t" style="left:1716.5px;top:126.0px;font-size:14px;color:#ff3232;font-family:'Liberation Sans',sans-serif;letter-spacing:.1px">24.51</div>
<div class="t" style="right:27px;top:126.0px;font-size:14px;color:#e6e600;letter-spacing:.1px;">343</div>
<div class="t" style="left:1617px;top:141.5px;font-size:17px;color:#e0e0e0;font-family:'Liberation Serif','Noto Sans CJK SC',serif;">卖二</div>
<div class="t" style="left:1716.5px;top:144.0px;font-size:14px;color:#ff3232;font-family:'Liberation Sans',sans-serif;letter-spacing:.1px">24.50</div>
<div class="t" style="right:27px;top:144.0px;font-size:14px;color:#e6e600;letter-spacing:.1px;">139</div>
<div class="t" style="left:1617px;top:159.5px;font-size:17px;color:#e0e0e0;font-family:'Liberation Serif','Noto Sans CJK SC',serif;">卖一</div>
<div class="t" style="left:1716.5px;top:162.0px;font-size:14px;color:#ff3232;font-family:'Liberation Sans',sans-serif;letter-spacing:.1px">24.49</div>
<div class="t" style="right:27px;top:162.0px;font-size:14px;color:#e6e600;letter-spacing:.1px;">124</div>
<div class="t" style="left:1617px;top:178.5px;font-size:17px;color:#e0e0e0;font-family:'Liberation Serif','Noto Sans CJK SC',serif;">买一</div>
<div class="t" style="left:1716.5px;top:181.0px;font-size:14px;color:#ff3232;font-family:'Liberation Sans',sans-serif;letter-spacing:.1px">24.48</div>
<div class="t" style="right:27px;top:181.0px;font-size:14px;color:#e6e600;letter-spacing:.1px;">25</div>
<div class="t" style="left:1617px;top:196.5px;font-size:17px;color:#e0e0e0;font-family:'Liberation Serif','Noto Sans CJK SC',serif;">买二</div>
<div class="t" style="left:1716.5px;top:199.0px;font-size:14px;color:#ff3232;font-family:'Liberation Sans',sans-serif;letter-spacing:.1px">24.46</div>
<div class="t" style="right:27px;top:199.0px;font-size:14px;color:#e6e600;letter-spacing:.1px;">8</div>
<div class="t" style="left:1617px;top:214.5px;font-size:17px;color:#e0e0e0;font-family:'Liberation Serif','Noto Sans CJK SC',serif;">买三</div>
<div class="t" style="left:1716.5px;top:217.0px;font-size:14px;color:#ff3232;font-family:'Liberation Sans',sans-serif;letter-spacing:.1px">24.45</div>
<div class="t" style="right:27px;top:217.0px;font-size:14px;color:#e6e600;letter-spacing:.1px;">4</div>
<div class="t" style="left:1617px;top:232.5px;font-size:17px;color:#e0e0e0;font-family:'Liberation Serif','Noto Sans CJK SC',serif;">买四</div>
<div class="t" style="left:1716.5px;top:235.0px;font-size:14px;color:#ff3232;font-family:'Liberation Sans',sans-serif;letter-spacing:.1px">24.44</div>
<div class="t" style="right:27px;top:235.0px;font-size:14px;color:#e6e600;letter-spacing:.1px;">23</div>
<div class="t" style="left:1617px;top:250.5px;font-size:17px;color:#e0e0e0;font-family:'Liberation Serif','Noto Sans CJK SC',serif;">买五</div>
<div class="t" style="left:1716.5px;top:253.0px;font-size:14px;color:#ff3232;font-family:'Liberation Sans',sans-serif;letter-spacing:.1px">24.43</div>
<div class="t" style="right:27px;top:253.0px;font-size:14px;color:#e6e600;letter-spacing:.1px;">131</div>
<div class="hl" style="left:1615px;top:177px;width:280px;background:#3296c8"></div>
<div class="hl" style="left:1615px;top:177px;width:47px;background:#c89632"></div>
<div class="hl" style="left:1615px;top:270px;width:280px;"></div>
<div class="t" style="left:1617px;top:273.5px;font-size:17px;color:#e0e0e0;font-family:'Liberation Serif','Noto Sans CJK SC',serif;">今开</div>
<div class="t" style="right:168px;top:276.0px;font-size:14px;color:#00e600;letter-spacing:.1px;">24.17</div>
<div class="t" style="left:1757px;top:273.5px;font-size:17px;color:#e0e0e0;font-family:'Liberation Serif','Noto Sans CJK SC',serif;">均价</div>
<div class="t" style="right:27px;top:276.0px;font-size:14px;color:#ff3232;letter-spacing:.1px;">24.29</div>
<div class="t" style="left:1617px;top:292.5px;font-size:17px;color:#e0e0e0;font-family:'Liberation Serif','Noto Sans CJK SC',serif;">最高</div>
<div class="t" style="right:168px;top:295.0px;font-size:14px;color:#ff3232;letter-spacing:.1px;">24.65</div>
<div class="t" style="left:1757px;top:292.5px;font-size:17px;color:#e0e0e0;font-family:'Liberation Serif','Noto Sans CJK SC',serif;">量比</div>
<div class="t" style="right:27px;top:295.0px;font-size:14px;color:#00e600;letter-spacing:.1px;">0.75</div>
<div class="t" style="left:1617px;top:311.0px;font-size:17px;color:#e0e0e0;font-family:'Liberation Serif','Noto Sans CJK SC',serif;">最低</div>
<div class="t" style="right:168px;top:313.5px;font-size:14px;color:#00e600;letter-spacing:.1px;">23.89</div>
<div class="t" style="left:1757px;top:311.0px;font-size:17px;color:#e0e0e0;font-family:'Liberation Serif','Noto Sans CJK SC',serif;">市值</div>
<div class="t" style="right:27px;top:313.5px;font-size:14px;color:#c0c0c0;letter-spacing:.1px;">680.0亿</div>
<div class="t" style="left:1617px;top:330.0px;font-size:17px;color:#e0e0e0;font-family:'Liberation Serif','Noto Sans CJK SC',serif;">现量</div>
<div class="t" style="right:168px;top:332.5px;font-size:14px;color:#e600e6;letter-spacing:.1px;">2148</div>
<div class="t" style="left:1757px;top:330.0px;font-size:17px;color:#e0e0e0;font-family:'Liberation Serif','Noto Sans CJK SC',serif;">总量</div>
<div class="t" style="right:27px;top:332.5px;font-size:14px;color:#c0c0c0;letter-spacing:.1px;">360464</div>
<div class="t" style="left:1617px;top:348.5px;font-size:17px;color:#e0e0e0;font-family:'Liberation Serif','Noto Sans CJK SC',serif;">外盘</div>
<div class="t" style="right:168px;top:351.0px;font-size:14px;color:#ff3232;letter-spacing:.1px;">174187</div>
<div class="t" style="left:1757px;top:348.5px;font-size:17px;color:#e0e0e0;font-family:'Liberation Serif','Noto Sans CJK SC',serif;">内盘</div>
<div class="t" style="right:27px;top:351.0px;font-size:14px;color:#00e600;letter-spacing:.1px;">186277</div>
<div class="hl" style="left:1615px;top:367px;width:280px;"></div>
<div class="t" style="left:1617px;top:370.0px;font-size:17px;color:#e0e0e0;font-family:'Liberation Serif','Noto Sans CJK SC',serif;">换手</div>
<div class="t" style="right:168px;top:372.5px;font-size:14px;color:#c0c0c0;letter-spacing:.1px;">1.43%</div>
<div class="t" style="left:1757px;top:370.0px;font-size:17px;color:#e0e0e0;font-family:'Liberation Serif','Noto Sans CJK SC',serif;">股本</div>
<div class="t" style="right:27px;top:372.5px;font-size:14px;color:#c0c0c0;letter-spacing:.1px;">27.8亿</div>
<div class="t" style="left:1617px;top:388.5px;font-size:17px;color:#e0e0e0;font-family:'Liberation Serif','Noto Sans CJK SC',serif;">净资</div>
<div class="t" style="right:168px;top:391.0px;font-size:14px;color:#c0c0c0;letter-spacing:.1px;">5.20</div>
<div class="t" style="left:1757px;top:388.5px;font-size:17px;color:#e0e0e0;font-family:'Liberation Serif','Noto Sans CJK SC',serif;">流通</div>
<div class="t" style="right:27px;top:391.0px;font-size:14px;color:#c0c0c0;letter-spacing:.1px;">25.3亿</div>
<div class="t" style="left:1617px;top:408.0px;font-size:17px;color:#e0e0e0;font-family:'Liberation Serif','Noto Sans CJK SC',serif;">收益㈢</div>
<div class="t" style="right:168px;top:410.5px;font-size:14px;color:#c0c0c0;letter-spacing:.1px;">0.890</div>
<div class="t" style="left:1757px;top:408.0px;font-size:17px;color:#e0e0e0;font-family:'Liberation Serif','Noto Sans CJK SC',serif;"><span style="font-family:'Liberation Sans',sans-serif;font-size:14px">PE(</span>动<span style="font-family:'Liberation Sans',sans-serif;font-size:14px">)</span></div>
<div class="t" style="right:27px;top:410.5px;font-size:14px;color:#c0c0c0;letter-spacing:.1px;">20.7</div>
<div class="hl" style="left:1615px;top:429px;width:280px;"></div>
<div class="t" style="left:1617px;top:431.0px;font-size:17px;color:#e0e0e0;font-family:'Liberation Serif','Noto Sans CJK SC',serif;">交易状态: 闭市阶段</div>
<div class="t" style="left:1765px;top:433.0px;font-size:14px;color:#e0e0e0;font-family:'Liberation Sans',sans-serif;letter-spacing:.2px">15:00:00</div>
<div class="hl" style="left:1615px;top:449px;width:280px;"></div>
<div class="t" style="left:1617px;top:452.0px;font-size:17px;color:#e0e0e0;font-family:'Liberation Serif','Noto Sans CJK SC',serif;">主力净额</div>
<svg class="abs" style="left:1687px;top:454px" width="14" height="13"><rect x=".5" y=".5" width="12" height="11" rx="2" fill="#404040" stroke="#808080"/><path d="M3 3.5h7M3 6h7M3 8.5h7" stroke="#a0a0a0" stroke-width="1"/></svg>
<div class="abs" style="left:1709px;top:456px;width:70px;height:7px;background:#00e600"></div>
<div class="t" style="right:68px;top:453.5px;font-size:14px;color:#00e600;letter-spacing:.1px;">-2636万</div>
<div class="t" style="right:27px;top:453.5px;font-size:14px;color:#00e600;letter-spacing:.1px;">-3%</div>
<div class="hl" style="left:1615px;top:472px;width:280px;"></div>
<div class="t" style="left:1617px;top:475.0px;font-size:14px;color:#c0c0c0;font-family:'Liberation Sans',sans-serif;letter-spacing:.2px">14:55</div>
<div class="t" style="right:167px;top:475.0px;font-size:14px;color:#ff3232;letter-spacing:.1px;">24.44</div>
<div class="t" style="right:85px;top:475.0px;font-size:14px;color:#e6e600;letter-spacing:.1px;">10</div>
<div class="t" style="left:1851px;top:475.0px;font-size:14px;color:#ff3232;font-family:'Liberation Sans',sans-serif;">B</div>
<div class="t" style="right:27px;top:475.0px;font-size:14px;color:#909090;letter-spacing:.1px;">5</div>
<div class="t" style="right:167px;top:493.0px;font-size:14px;color:#ff3232;letter-spacing:.1px;">24.43</div>
<div class="t" style="right:85px;top:493.0px;font-size:14px;color:#e6e600;letter-spacing:.1px;">4</div>
<div class="t" style="left:1851px;top:493.0px;font-size:14px;color:#00e600;font-family:'Liberation Sans',sans-serif;">S</div>
<div class="t" style="right:27px;top:493.0px;font-size:14px;color:#909090;letter-spacing:.1px;">3</div>
<div class="t" style="right:167px;top:511.0px;font-size:14px;color:#ff3232;letter-spacing:.1px;">24.44</div>
<div class="t" style="right:85px;top:511.0px;font-size:14px;color:#e6e600;letter-spacing:.1px;">58</div>
<div class="t" style="left:1851px;top:511.0px;font-size:14px;color:#ff3232;font-family:'Liberation Sans',sans-serif;">B</div>
<div class="t" style="right:27px;top:511.0px;font-size:14px;color:#909090;letter-spacing:.1px;">19</div>
<div class="t" style="right:167px;top:529.0px;font-size:14px;color:#ff3232;letter-spacing:.1px;">24.43</div>
<div class="t" style="right:85px;top:529.0px;font-size:14px;color:#e6e600;letter-spacing:.1px;">35</div>
<div class="t" style="left:1851px;top:529.0px;font-size:14px;color:#00e600;font-family:'Liberation Sans',sans-serif;">S</div>
<div class="t" style="right:27px;top:529.0px;font-size:14px;color:#909090;letter-spacing:.1px;">3</div>
<div class="t" style="right:167px;top:547.0px;font-size:14px;color:#ff3232;letter-spacing:.1px;">24.43</div>
<div class="t" style="right:85px;top:547.0px;font-size:14px;color:#e6e600;letter-spacing:.1px;">40</div>
<div class="t" style="left:1851px;top:547.0px;font-size:14px;color:#00e600;font-family:'Liberation Sans',sans-serif;">S</div>
<div class="t" style="right:27px;top:547.0px;font-size:14px;color:#909090;letter-spacing:.1px;">7</div>
<div class="t" style="right:167px;top:565.0px;font-size:14px;color:#ff3232;letter-spacing:.1px;">24.45</div>
<div class="t" style="right:85px;top:565.0px;font-size:14px;color:#e6e600;letter-spacing:.1px;">15</div>
<div class="t" style="left:1851px;top:565.0px;font-size:14px;color:#ff3232;font-family:'Liberation Sans',sans-serif;">B</div>
<div class="t" style="right:27px;top:565.0px;font-size:14px;color:#909090;letter-spacing:.1px;">6</div>
<div class="t" style="right:167px;top:583.0px;font-size:14px;color:#ff3232;letter-spacing:.1px;">24.43</div>
<div class="t" style="right:85px;top:583.0px;font-size:14px;color:#e6e600;letter-spacing:.1px;">3</div>
<div class="t" style="left:1851px;top:583.0px;font-size:14px;color:#00e600;font-family:'Liberation Sans',sans-serif;">S</div>
<div class="t" style="right:27px;top:583.0px;font-size:14px;color:#909090;letter-spacing:.1px;">2</div>
<div class="t" style="left:1617px;top:601.0px;font-size:14px;color:#c0c0c0;font-family:'Liberation Sans',sans-serif;letter-spacing:.2px">14:56</div>
<div class="t" style="right:167px;top:601.0px;font-size:14px;color:#ff3232;letter-spacing:.1px;">24.43</div>
<div class="t" style="right:85px;top:601.0px;font-size:14px;color:#e6e600;letter-spacing:.1px;">22</div>
<div class="t" style="left:1851px;top:601.0px;font-size:14px;color:#00e600;font-family:'Liberation Sans',sans-serif;">S</div>
<div class="t" style="right:27px;top:601.0px;font-size:14px;color:#909090;letter-spacing:.1px;">11</div>
<div class="t" style="right:167px;top:619.0px;font-size:14px;color:#ff3232;letter-spacing:.1px;">24.43</div>
<div class="t" style="right:85px;top:619.0px;font-size:14px;color:#e6e600;letter-spacing:.1px;">36</div>
<div class="t" style="left:1851px;top:619.0px;font-size:14px;color:#00e600;font-family:'Liberation Sans',sans-serif;">S</div>
<div class="t" style="right:27px;top:619.0px;font-size:14px;color:#909090;letter-spacing:.1px;">7</div>
<div class="t" style="right:167px;top:637.0px;font-size:14px;color:#ff3232;letter-spacing:.1px;">24.43</div>
<div class="t" style="right:85px;top:637.0px;font-size:14px;color:#e6e600;letter-spacing:.1px;">6</div>
<div class="t" style="left:1851px;top:637.0px;font-size:14px;color:#00e600;font-family:'Liberation Sans',sans-serif;">S</div>
<div class="t" style="right:27px;top:637.0px;font-size:14px;color:#909090;letter-spacing:.1px;">3</div>
<div class="t" style="right:167px;top:655.0px;font-size:14px;color:#ff3232;letter-spacing:.1px;">24.44</div>
<div class="t" style="right:85px;top:655.0px;font-size:14px;color:#e6e600;letter-spacing:.1px;">32</div>
<div class="t" style="left:1851px;top:655.0px;font-size:14px;color:#ff3232;font-family:'Liberation Sans',sans-serif;">B</div>
<div class="t" style="right:27px;top:655.0px;font-size:14px;color:#909090;letter-spacing:.1px;">13</div>
<div class="t" style="right:167px;top:673.0px;font-size:14px;color:#ff3232;letter-spacing:.1px;">24.44</div>
<div class="t" style="right:85px;top:673.0px;font-size:14px;color:#e6e600;letter-spacing:.1px;">83</div>
<div class="t" style="left:1851px;top:673.0px;font-size:14px;color:#00e600;font-family:'Liberation Sans',sans-serif;">S</div>
<div class="t" style="right:27px;top:673.0px;font-size:14px;color:#909090;letter-spacing:.1px;">17</div>
<div class="t" style="right:167px;top:691.0px;font-size:14px;color:#ff3232;letter-spacing:.1px;">24.42</div>
<div class="t" style="right:85px;top:691.0px;font-size:14px;color:#e6e600;letter-spacing:.1px;">64</div>
<div class="t" style="left:1851px;top:691.0px;font-size:14px;color:#00e600;font-family:'Liberation Sans',sans-serif;">S</div>
<div class="t" style="right:27px;top:691.0px;font-size:14px;color:#909090;letter-spacing:.1px;">22</div>
<div class="t" style="right:167px;top:709.0px;font-size:14px;color:#ff3232;letter-spacing:.1px;">24.46</div>
<div class="t" style="right:85px;top:709.0px;font-size:14px;color:#e6e600;letter-spacing:.1px;">37</div>
<div class="t" style="left:1851px;top:709.0px;font-size:14px;color:#ff3232;font-family:'Liberation Sans',sans-serif;">B</div>
<div class="t" style="right:27px;top:709.0px;font-size:14px;color:#909090;letter-spacing:.1px;">13</div>
<div class="t" style="right:167px;top:727.0px;font-size:14px;color:#ff3232;letter-spacing:.1px;">24.42</div>
<div class="t" style="right:85px;top:727.0px;font-size:14px;color:#e6e600;letter-spacing:.1px;">10</div>
<div class="t" style="left:1851px;top:727.0px;font-size:14px;color:#00e600;font-family:'Liberation Sans',sans-serif;">S</div>
<div class="t" style="right:27px;top:727.0px;font-size:14px;color:#909090;letter-spacing:.1px;">2</div>
<div class="t" style="right:167px;top:745.0px;font-size:14px;color:#ff3232;letter-spacing:.1px;">24.44</div>
<div class="t" style="right:85px;top:745.0px;font-size:14px;color:#e6e600;letter-spacing:.1px;">14</div>
<div class="t" style="left:1851px;top:745.0px;font-size:14px;color:#00e600;font-family:'Liberation Sans',sans-serif;">S</div>
<div class="t" style="right:27px;top:745.0px;font-size:14px;color:#909090;letter-spacing:.1px;">5</div>
<div class="t" style="right:167px;top:763.0px;font-size:14px;color:#ff3232;letter-spacing:.1px;">24.43</div>
<div class="t" style="right:85px;top:763.0px;font-size:14px;color:#e6e600;letter-spacing:.1px;">60</div>
<div class="t" style="right:27px;top:763.0px;font-size:14px;color:#909090;letter-spacing:.1px;">15</div>
<div class="t" style="right:167px;top:781.0px;font-size:14px;color:#ff3232;letter-spacing:.1px;">24.42</div>
<div class="t" style="right:85px;top:781.0px;font-size:14px;color:#e6e600;letter-spacing:.1px;">143</div>
<div class="t" style="left:1851px;top:781.0px;font-size:14px;color:#00e600;font-family:'Liberation Sans',sans-serif;">S</div>
<div class="t" style="right:27px;top:781.0px;font-size:14px;color:#909090;letter-spacing:.1px;">53</div>
<div class="t" style="right:167px;top:799.0px;font-size:14px;color:#ff3232;letter-spacing:.1px;">24.42</div>
<div class="t" style="right:85px;top:799.0px;font-size:14px;color:#e6e600;letter-spacing:.1px;">25</div>
<div class="t" style="left:1851px;top:799.0px;font-size:14px;color:#00e600;font-family:'Liberation Sans',sans-serif;">S</div>
<div class="t" style="right:27px;top:799.0px;font-size:14px;color:#909090;letter-spacing:.1px;">13</div>
<div class="t" style="right:167px;top:817.0px;font-size:14px;color:#ff3232;letter-spacing:.1px;">24.42</div>
<div class="t" style="right:85px;top:817.0px;font-size:14px;color:#e6e600;letter-spacing:.1px;">88</div>
<div class="t" style="left:1851px;top:817.0px;font-size:14px;color:#00e600;font-family:'Liberation Sans',sans-serif;">S</div>
<div class="t" style="right:27px;top:817.0px;font-size:14px;color:#909090;letter-spacing:.1px;">15</div>
<div class="t" style="right:167px;top:835.0px;font-size:14px;color:#ff3232;letter-spacing:.1px;">24.44</div>
<div class="t" style="right:85px;top:835.0px;font-size:14px;color:#e6e600;letter-spacing:.1px;">41</div>
<div class="t" style="left:1851px;top:835.0px;font-size:14px;color:#ff3232;font-family:'Liberation Sans',sans-serif;">B</div>
<div class="t" style="right:27px;top:835.0px;font-size:14px;color:#909090;letter-spacing:.1px;">16</div>
<div class="t" style="right:167px;top:853.0px;font-size:14px;color:#ff3232;letter-spacing:.1px;">24.42</div>
<div class="t" style="right:85px;top:853.0px;font-size:14px;color:#e6e600;letter-spacing:.1px;">62</div>
<div class="t" style="left:1851px;top:853.0px;font-size:14px;color:#00e600;font-family:'Liberation Sans',sans-serif;">S</div>
<div class="t" style="right:27px;top:853.0px;font-size:14px;color:#909090;letter-spacing:.1px;">12</div>
<div class="t" style="right:167px;top:871.0px;font-size:14px;color:#ff3232;letter-spacing:.1px;">24.43</div>
<div class="t" style="right:85px;top:871.0px;font-size:14px;color:#e6e600;letter-spacing:.1px;">18</div>
<div class="t" style="right:27px;top:871.0px;font-size:14px;color:#909090;letter-spacing:.1px;">3</div>
<div class="t" style="right:167px;top:889.0px;font-size:14px;color:#ff3232;letter-spacing:.1px;">24.42</div>
<div class="t" style="right:85px;top:889.0px;font-size:14px;color:#e6e600;letter-spacing:.1px;">182</div>
<div class="t" style="left:1851px;top:889.0px;font-size:14px;color:#00e600;font-family:'Liberation Sans',sans-serif;">S</div>
<div class="t" style="right:27px;top:889.0px;font-size:14px;color:#909090;letter-spacing:.1px;">20</div>
<div class="t" style="right:167px;top:907.0px;font-size:14px;color:#ff3232;letter-spacing:.1px;">24.43</div>
<div class="t" style="right:85px;top:907.0px;font-size:14px;color:#e6e600;letter-spacing:.1px;">36</div>
<div class="t" style="right:27px;top:907.0px;font-size:14px;color:#909090;letter-spacing:.1px;">12</div>
<div class="t" style="right:167px;top:925.0px;font-size:14px;color:#ff3232;letter-spacing:.1px;">24.44</div>
<div class="t" style="right:85px;top:925.0px;font-size:14px;color:#e6e600;letter-spacing:.1px;">35</div>
<div class="t" style="left:1851px;top:925.0px;font-size:14px;color:#ff3232;font-family:'Liberation Sans',sans-serif;">B</div>
<div class="t" style="right:27px;top:925.0px;font-size:14px;color:#909090;letter-spacing:.1px;">4</div>
<div class="t" style="left:1617px;top:943.0px;font-size:14px;color:#c0c0c0;font-family:'Liberation Sans',sans-serif;letter-spacing:.2px">14:57</div>
<div class="t" style="right:167px;top:943.0px;font-size:14px;color:#ff3232;letter-spacing:.1px;">24.43</div>
<div class="t" style="right:85px;top:943.0px;font-size:14px;color:#e6e600;letter-spacing:.1px;">22</div>
<div class="t" style="left:1851px;top:943.0px;font-size:14px;color:#ff3232;font-family:'Liberation Sans',sans-serif;">B</div>
<div class="t" style="right:27px;top:943.0px;font-size:14px;color:#909090;letter-spacing:.1px;">2</div>
<div class="t" style="left:1617px;top:961.0px;font-size:14px;color:#c0c0c0;font-family:'Liberation Sans',sans-serif;letter-spacing:.2px">15:00</div>
<div class="t" style="right:167px;top:961.0px;font-size:14px;color:#ff3232;letter-spacing:.1px;">24.49</div>
<div class="t" style="right:85px;top:961.0px;font-size:14px;color:#e600e6;letter-spacing:.1px;">2148</div>
<div class="t" style="right:27px;top:961.0px;font-size:14px;color:#909090;letter-spacing:.1px;">169</div>
<div class="abs" style="left:1617px;top:599px;width:278px;height:1px;background-image:linear-gradient(90deg,#c80000 1px,transparent 1px);background-size:4px 1px"></div>
<div class="abs" style="left:1617px;top:941px;width:278px;height:1px;background-image:linear-gradient(90deg,#c80000 1px,transparent 1px);background-size:4px 1px"></div>
<div class="abs" style="left:1617px;top:959px;width:278px;height:1px;background-image:linear-gradient(90deg,#c80000 1px,transparent 1px);background-size:4px 1px"></div>
<div id="strip"><svg class="abs" style="left:3px;top:2.4px" width="17" height="16" viewBox="0 0 17 16"><path d="M1.500 8L6.500 2.500v3.200h8v4.600h-8v3.200z" fill="#fff" stroke="#2a6fe0" stroke-width="1"/></svg><svg class="abs" style="left:3px;top:25.0px" width="17" height="16" viewBox="0 0 17 16"><path d="M8.500 1l5.500 5.500h-3.200v8.500h-4.600V6.500H3z" fill="#fff" stroke="#2a6fe0" stroke-width="1"/></svg><svg class="abs" style="left:3px;top:48.6px" width="17" height="16" viewBox="0 0 17 16"><path d="M8.500 15l5.500-5.500h-3.200V1h-4.600v8.500H3z" fill="#fff" stroke="#2a6fe0" stroke-width="1"/></svg><svg class="abs" style="left:3px;top:70.4px" width="17" height="16" viewBox="0 0 17 16"><rect x="1.5" y="1.5" width="14" height="12.500" fill="#fff" stroke="#3c7cf0" stroke-width="1"/><path d="M3.500 4.500h4.500M3.500 7h4.500M3.500 9.500h4.500" stroke="#00a000" stroke-width="1.300"/><path d="M9 4.500h5M9 7h5" stroke="#e00000" stroke-width="1.300"/><circle cx="11.800" cy="10.800" r="2.700" fill="#e0e0e0" stroke="#707070"/><path d="M10.500 10.800l1 1 1.600-2.200" stroke="#404040" stroke-width=".9" fill="none"/></svg><svg class="abs" style="left:3px;top:93.6px" width="17" height="16" viewBox="0 0 17 16"><rect x="1.5" y="1.5" width="14" height="12.500" fill="#fff" stroke="#3c7cf0" stroke-width="1"/><path d="M3.500 4.500h2.500M7 4.500h2.500M10.500 4.500h3M3.500 6.500h2.500M7 6.500h2.500M10.500 6.500h3" stroke="#e00000" stroke-width="1.200"/><path d="M3.500 8.500h2.500M10.500 8.500h3M3.500 10.500h2.500M10.500 10.500h3M3.500 12.300h2.500M10.500 12.300h3" stroke="#0040e0" stroke-width="1.200"/><path d="M7 8.500h2.500M7 10.500h2.500M7 12.300h2.500" stroke="#00a000" stroke-width="1.200"/></svg><svg class="abs" style="left:3px;top:116.4px" width="17" height="16" viewBox="0 0 17 16"><rect x="1.5" y="1.5" width="14" height="12.500" fill="#fff" stroke="#3c7cf0" stroke-width="1"/><path d="M2.500 11.500l3-3 2.500 1 3-3.500 3.500-1.500" stroke="#e00000" stroke-width="1.300" fill="none"/></svg><svg class="abs" style="left:3px;top:139.1px" width="17" height="16" viewBox="0 0 17 16"><rect x="1.5" y="1.5" width="14" height="12.500" fill="#fff" stroke="#3c7cf0" stroke-width="1"/><path d="M4.500 3.500v9M8.500 3.500v9M12.500 3v8" stroke="#e00000" stroke-width="1"/><rect x="3.200" y="6" width="2.600" height="4" fill="#e00000"/><rect x="7.200" y="5.500" width="2.600" height="5" fill="#00a000"/><rect x="11.200" y="4" width="2.600" height="4" fill="#e00000"/></svg><svg class="abs" style="left:3px;top:162.9px" width="17" height="16" viewBox="0 0 17 16"><rect x="4.500" y="1.500" width="11.500" height="9" fill="#fff" stroke="#3c7cf0"/><rect x="1.500" y="4.500" width="11.500" height="10" fill="#fff" stroke="#3c7cf0"/><path d="M3.500 8.500h3.500M8 8.500h3.500M3.500 11.500h3.500M8 11.500h3.500" stroke="#505050" stroke-width="1.300"/></svg><svg class="abs" style="left:3px;top:186.7px" width="17" height="16" viewBox="0 0 17 16"><rect x="1.5" y="1.5" width="14" height="12.500" fill="#fff" stroke="#3c7cf0" stroke-width="1"/><path d="M4 4.500h3.200M4 4.500v7M4 8h2.500M8.800 7v4.500M10.800 8h2.700v3.500h-2.700z" stroke="#2a6fe0" stroke-width="1.200" fill="none"/></svg><svg class="abs" style="left:3px;top:209.6px" width="17" height="16" viewBox="0 0 17 16"><rect x="1.5" y="1.5" width="14" height="12.500" fill="#fff" stroke="#3c7cf0" stroke-width="1"/><path d="M3.500 3.500h4.500v2.500h-4.500z" fill="#f8d040" stroke="#e08000" stroke-width=".8"/><path d="M9 7.500h4.500v2h-4.500zM9 10.800h4.500v1.700h-4.500z" stroke="#e08000" stroke-width=".8" fill="#f8d040"/><path d="M5.500 6v5.700h3.500M5.500 8.500h3.500" stroke="#3070d0" stroke-width=".9" fill="none"/></svg><svg class="abs" style="left:3px;top:232.0px" width="17" height="16" viewBox="0 0 17 16"><rect x="1.5" y="1.5" width="14" height="12.500" fill="#fff" stroke="#3c7cf0" stroke-width="1"/><text x="8.5" y="12" font-size="10" font-weight="bold" fill="#f07020" text-anchor="middle" font-family="Liberation Sans, Noto Sans CJK SC, sans-serif">自</text></svg><svg class="abs" style="left:3px;top:255.3px" width="17" height="16" viewBox="0 0 17 16"><rect x="1.5" y="1.5" width="14" height="12.500" fill="#fff" stroke="#3c7cf0" stroke-width="1"/><path d="M3.500 4.500h3.200M3.500 4.500v7M3.500 8h2.500M8.300 7v4.500M10.300 8h3.200l-3.200 3.500h3.200" stroke="#2a6fe0" stroke-width="1.200" fill="none"/></svg><svg class="abs" style="left:3px;top:278.4px" width="17" height="16" viewBox="0 0 17 16"><rect x="1.500" y="1" width="14" height="14" rx="4" fill="#fff" stroke="#208078" stroke-width="1.200"/><path d="M4 13c1.500 0 1.500-1.500 2-5s1-5 2.500-5M4.500 7.500h3.500M9.500 6.500c-1 1.500-1 4.500 0 6M13.500 6.500c1 1.500 1 4.500 0 6M10.300 8l2.400 3.500M12.700 8l-2.400 3.500" stroke="#2040c0" stroke-width=".9" fill="none"/></svg><svg class="abs" style="left:3px;top:300.9px" width="17" height="16" viewBox="0 0 17 16"><rect x="1.5" y="1.5" width="14" height="12.500" fill="#fff" stroke="#3c7cf0" stroke-width="1"/><circle cx="8.500" cy="7.800" r="3.300" fill="none" stroke="#2a6fe0" stroke-width="1.300"/></svg><div class="abs" style="left:3px;top:324px;width:18px;height:1px;background:#a0a0a0"></div><svg class="abs" style="left:3px;top:332.0px" width="17" height="16" viewBox="0 0 17 16"><rect x="1.5" y="1.5" width="14" height="12.500" fill="#fff" stroke="#3c7cf0" stroke-width="1"/><path d="M2.500 6l1.500-1.500 1.500 1.500 1.500-1.500 1.500 1.500 1.500-1.500 1.500 1.500 1.500-1.500 1.500 1.500" stroke="#e00000" stroke-width="1" fill="none"/><path d="M2.500 10.500l1.500-1.500 1.500 1.500 1.500-1.500 1.500 1.500 1.500-1.500 1.500 1.500 1.500-1.500 1.500 1.500" stroke="#0040e0" stroke-width="1" fill="none"/></svg><div class="t b" style="left:2px;top:357px;font-size:11px;color:#2040c0;letter-spacing:-.5px">RSI</div><div class="t b" style="left:6px;top:379px;font-size:15px;color:#d02020">S</div><div class="abs" style="left:8px;top:376px;width:0;height:0;border:3.500px solid transparent;border-bottom:4px solid #d02020;border-top:none"></div><svg class="abs" style="left:3px;top:401.4px" width="17" height="16" viewBox="0 0 17 16"><path d="M8.500 .5l3 3.500h-2v2.500h2.500v-2l3.500 3-3.500 3v-2h-2.500v2.500h2l-3 3.500-3-3.500h2v-2.500h-2.500v2L1.500 7.500l3.500-3v2h2.500v-2.500h-2z" fill="#2050d0"/></svg><svg class="abs" style="left:3px;top:424.0px" width="17" height="16" viewBox="0 0 17 16"><path d="M2.500 14l1.500-4 7.500-7.500 2.500 2.500-7.500 7.500z" fill="#f0a030" stroke="#a06010" stroke-width=".8"/><path d="M2.500 14l1.500-4 2.500 2.500z" fill="#503010"/><path d="M11.500 2.500l2.500 2.500" stroke="#e05050" stroke-width="2"/></svg><div class="abs" style="left:3px;top:447px;width:18px;height:1px;background:#a0a0a0"></div><svg class="abs" style="left:3px;top:456.0px" width="17" height="16" viewBox="0 0 17 16"><rect x="1.5" y="1.5" width="14" height="12.500" fill="#fff" stroke="#3c7cf0" stroke-width="1"/><path d="M4.500 4.500h3.500M4.500 4.500v7M4.500 8h3M12.800 4.500h-3v3.300h2.800v3.500h-3" stroke="#2a6fe0" stroke-width="1.200" fill="none"/></svg><svg class="abs" style="left:3px;top:478.6px" width="17" height="16" viewBox="0 0 17 16"><rect x="1.5" y="1.5" width="14" height="12.500" fill="#fff" stroke="#3c7cf0" stroke-width="1"/><path d="M4.500 8a4 3.300 0 0 1 7-2l1.300-1v3.500h-3.800l1.200-1.200a2.600 2 0 0 0-4 .7zM12.500 8.500a4 3.300 0 0 1-7 2l-1.300 1v-3.500h3.800l-1.200 1.200a2.600 2 0 0 0 4-.7z" fill="#40b040"/></svg><div class="t" style="left:-1px;width:25px;text-align:center;top:503px;font-size:11px;color:#103080">1</div><div class="t" style="left:-1px;width:25px;text-align:center;top:526px;font-size:11px;color:#103080">5</div><div class="t" style="left:-1px;width:25px;text-align:center;top:549px;font-size:11px;color:#103080">15</div><div class="t" style="left:-1px;width:25px;text-align:center;top:572px;font-size:11px;color:#103080">30</div><div class="t" style="left:-1px;width:25px;text-align:center;top:595px;font-size:11px;color:#103080">60</div><div class="abs" style="left:1px;top:614px;width:22px;height:21px;background:#fff;border:1px solid #a0a0a0;border-right-color:#fff;border-bottom-color:#fff"></div><div class="t" style="left:-1px;width:25px;text-align:center;top:619px;font-size:12px;color:#103080">日</div><div class="t" style="left:-1px;width:25px;text-align:center;top:642px;font-size:12px;color:#103080">周</div><div class="t" style="left:-1px;width:25px;text-align:center;top:665px;font-size:12px;color:#103080">月</div><div class="t" style="left:-1px;width:25px;text-align:center;top:687px;font-size:12px;color:#103080">N</div><div class="t" style="left:-1px;width:25px;text-align:center;top:710px;font-size:12px;color:#103080">多</div><div class="t" style="left:-1px;width:25px;text-align:center;top:733px;font-size:12px;color:#103080">季</div><div class="t" style="left:-1px;width:25px;text-align:center;top:756px;font-size:12px;color:#103080">年</div></div>
</body></html>
